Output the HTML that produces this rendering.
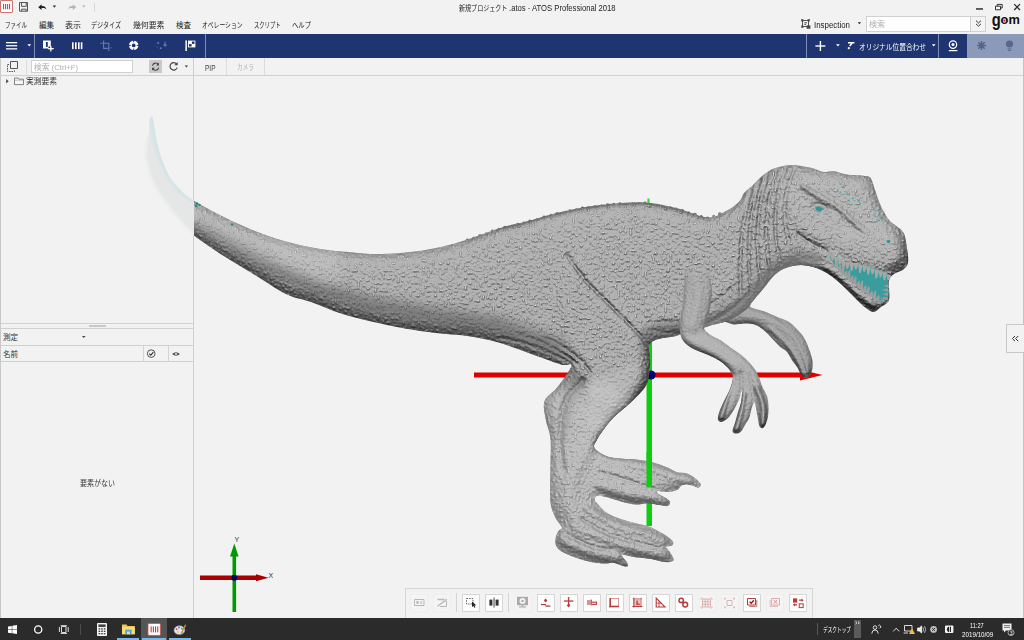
<!DOCTYPE html>
<html lang="ja">
<head>
<meta charset="utf-8">
<title>新規プロジェクト.atos - ATOS Professional 2018</title>
<style>
html,body{margin:0;padding:0;}
body{width:1024px;height:640px;overflow:hidden;position:relative;background:#f2f2f2;
 font-family:"Liberation Sans","Noto Sans CJK JP",sans-serif;font-size:8px;color:#222;}
.a{position:absolute;}
.t{position:absolute;white-space:nowrap;line-height:10px;height:10px;}
.w{color:#fff;}
svg{position:absolute;left:0;top:0;overflow:visible;}
#bluebar{left:0;top:34px;width:1024px;height:24px;background:#1f3571;}
#lightblue{left:967px;top:34px;width:57px;height:24px;background:#8c9aba;}
.vs{position:absolute;width:1px;background:#d4d4d4;}
.hs{position:absolute;height:1px;background:#d0d0d0;}
.btn{position:absolute;top:594px;width:16px;height:16px;background:#fdfdfd;border:1px solid #d6d6d6;box-sizing:content-box;}
.btn.d{background:#f4f4f4;border-color:#eeeeee;}
#taskbar{left:0;top:618px;width:1024px;height:22px;background:#2b2b2b;}
</style>
</head>
<body>
<!-- ===== title row ===== -->
<div class="a" style="left:0;top:0;width:13px;height:13px;background:#fff;border:1px solid #d07070;box-sizing:border-box;border-radius:1px;"></div>

<!-- ===== menu row ===== -->

<!-- right of menu row -->
<div class="a" style="left:866px;top:16px;width:105px;height:16px;background:#fff;border:1px solid #d0d0d0;box-sizing:border-box;"></div>
<div class="a" style="left:970px;top:16px;width:16px;height:16px;background:#f4f4f4;border:1px solid #d0d0d0;box-sizing:border-box;"></div>

<!-- ===== blue toolbar ===== -->
<div class="a" id="bluebar"></div>
<div class="a" id="lightblue"></div>
<div class="a" style="left:34px;top:34px;width:1px;height:24px;background:#7f8db5;"></div>
<div class="a" style="left:205px;top:34px;width:1px;height:24px;background:#7f8db5;"></div>
<div class="a" style="left:806px;top:34px;width:1px;height:24px;background:#7f8db5;"></div>
<div class="a" style="left:938px;top:34px;width:1px;height:24px;background:#7f8db5;"></div>

<!-- ===== sub toolbar ===== -->
<div class="a" style="left:0;top:58px;width:1px;height:560px;background:#c8c8c8;"></div>
<div class="vs" style="left:26px;top:60px;height:14px;background:#dcdcdc;"></div>
<div class="a" style="left:31px;top:60px;width:102px;height:13px;background:#fff;border:1px solid #d0d0d0;box-sizing:border-box;"></div>
<div class="a" style="left:149px;top:60px;width:13px;height:13px;background:#c9c9c9;"></div>
<div class="hs" style="left:0;top:75px;width:1024px;"></div>
<div class="vs" style="left:193px;top:58px;height:560px;background:#cfcfcf;"></div>
<div class="vs" style="left:226px;top:58px;height:17px;background:#dcdcdc;"></div>
<div class="vs" style="left:264px;top:58px;height:17px;background:#dcdcdc;"></div>

<!-- ===== left panel ===== -->
<div class="hs" style="left:1px;top:323px;width:192px;"></div>
<div class="a" style="left:89px;top:325px;width:17px;height:2px;background:#c8c8c8;"></div>
<div class="hs" style="left:1px;top:328px;width:192px;"></div>
<div class="hs" style="left:1px;top:345px;width:192px;"></div>
<div class="vs" style="left:143px;top:346px;height:15px;"></div>
<div class="vs" style="left:168px;top:346px;height:15px;"></div>
<div class="hs" style="left:1px;top:361px;width:192px;"></div>

<!-- ===== right collapse button ===== -->
<div class="a" style="left:1023px;top:58px;width:1px;height:560px;background:#c4c4c4;"></div>
<div class="a" style="left:1006px;top:324px;width:18px;height:29px;border:1px solid #c8c8c8;border-right:none;box-sizing:border-box;background:#f2f2f2;"></div>

<!-- ===== 3D VIEW ===== -->
<svg id="view" width="1024" height="640" viewBox="0 0 1024 640">
<defs>
<clipPath id="cpL"><rect x="0" y="76" width="194" height="542"/></clipPath>
<clipPath id="cpR"><rect x="194" y="76" width="830" height="542"/></clipPath>
<clipPath id="cpBA"><path d="M740.0,300.0C745.2,300.4 746.9,305.3 751.0,307.2C755.1,309.1 760.1,309.8 764.7,311.5C769.3,313.2 774.4,315.8 778.4,317.5C782.4,319.2 785.6,319.8 788.8,321.8C791.9,323.8 794.7,326.8 797.3,329.5C799.9,332.2 802.2,334.6 804.2,338.0C806.2,341.4 808.0,346.0 809.4,350.0C810.8,354.0 812.4,358.5 812.8,362.0C813.2,365.5 812.7,368.3 812.0,370.8C811.3,373.3 809.8,375.7 808.5,376.8C807.2,377.9 805.6,378.4 804.2,377.7C802.8,377.0 801.1,374.2 800.0,372.5C798.9,370.8 798.6,369.3 797.3,367.3C796.0,365.3 793.9,363.1 792.2,360.5C790.5,357.9 789.0,354.2 787.0,351.9C785.0,349.6 782.6,349.0 780.0,346.7C777.4,344.4 774.4,340.9 771.6,338.0C768.8,335.1 765.9,331.8 763.0,329.5C760.1,327.2 757.6,325.4 754.4,324.4C751.2,323.4 747.4,323.5 744.0,323.5C740.6,323.5 736.9,324.7 733.8,324.4C730.6,324.1 728.1,322.9 725.0,321.8C721.9,320.7 715.8,320.8 715.0,318.0C714.2,315.2 715.8,308.0 720.0,305.0C724.2,302.0 734.8,299.6 740.0,300.0Z"/></clipPath><clipPath id="cpFA"><path d="M686.0,268.0C688.2,264.5 693.3,263.7 697.0,264.0C700.7,264.3 705.5,265.7 708.0,270.0C710.5,274.3 711.6,284.2 712.0,290.0C712.4,295.8 711.4,300.0 710.6,305.0C709.9,310.0 708.6,316.2 707.5,320.0C706.4,323.8 703.6,325.6 704.0,328.0C704.4,330.4 707.3,332.5 710.0,334.5C712.7,336.5 716.8,337.8 720.3,340.0C723.8,342.2 727.4,345.2 731.0,347.8C734.6,350.4 738.6,352.7 742.0,355.6C745.4,358.5 749.0,361.9 751.6,365.0C754.2,368.1 756.0,370.7 757.8,374.4C759.6,378.1 761.0,383.4 762.5,387.0C764.0,390.6 766.0,392.7 767.0,396.0C768.0,399.3 768.6,403.6 768.8,407.0C768.9,410.4 768.5,413.7 768.0,416.6C767.5,419.5 766.5,422.4 765.6,424.4C764.7,426.3 763.5,428.0 762.5,428.3C761.5,428.6 760.2,427.7 759.4,426.0C758.6,424.3 758.4,421.4 757.8,418.0C757.1,414.6 756.1,408.2 755.5,405.6C754.9,403.0 754.6,402.0 754.0,402.5C753.4,403.0 752.4,406.2 751.6,408.8C750.8,411.3 750.2,415.4 749.2,418.0C748.2,420.6 746.7,422.1 745.3,424.4C743.9,426.7 742.3,430.4 740.6,432.0C738.9,433.6 736.4,434.0 735.0,433.8C733.6,433.5 732.5,432.4 732.5,430.6C732.5,428.8 734.2,425.7 735.0,422.8C735.8,419.9 736.5,416.8 737.5,413.4C738.5,410.0 740.2,405.9 741.0,402.5C741.8,399.1 741.9,394.8 742.0,393.0C742.1,391.2 741.9,390.5 741.4,391.6C740.9,392.7 740.3,396.3 739.0,399.4C737.7,402.5 735.4,407.2 733.6,410.3C731.8,413.4 730.0,416.1 728.0,418.0C726.0,419.9 723.6,421.7 721.9,422.0C720.2,422.3 718.5,421.1 718.0,419.7C717.5,418.3 717.9,416.3 718.8,413.4C719.6,410.5 721.6,406.4 723.4,402.5C725.2,398.6 728.1,393.9 729.7,390.0C731.3,386.1 732.5,381.9 732.8,379.0C733.1,376.1 732.3,374.9 731.2,372.8C730.2,370.7 728.7,368.7 726.6,366.6C724.5,364.5 721.9,362.3 718.8,360.3C715.6,358.3 710.9,356.2 707.8,354.8C704.7,353.4 703.0,353.0 700.0,351.7C697.0,350.4 693.0,349.1 690.0,347.0C687.0,344.9 683.7,342.2 682.0,339.0C680.3,335.8 680.0,332.0 679.8,328.0C679.6,324.0 680.5,319.3 681.0,315.0C681.5,310.7 682.5,307.0 683.0,302.0C683.5,297.0 683.5,290.7 684.0,285.0C684.5,279.3 683.8,271.5 686.0,268.0Z"/></clipPath>
<linearGradient id="gFA" gradientUnits="userSpaceOnUse" x1="0" y1="264" x2="0" y2="292"><stop offset="0" stop-color="#fff" stop-opacity="0"/><stop offset="1" stop-color="#fff" stop-opacity="1"/></linearGradient>
<mask id="mFA" maskUnits="userSpaceOnUse" x="670" y="255" width="110" height="190"><rect x="670" y="255" width="110" height="190" fill="url(#gFA)"/></mask>
<clipPath id="cpD"><path d="M152.2,116.0C153.0,117.2 153.8,123.7 154.6,128.0C155.4,132.3 155.8,136.9 157.0,142.0C158.2,147.1 159.5,152.7 161.6,158.5C163.7,164.3 166.5,171.6 169.8,177.0C173.1,182.4 177.5,187.0 181.5,191.0C185.5,195.0 187.0,196.5 194.0,200.8C201.0,205.1 213.6,212.0 223.8,217.0C233.9,222.0 244.6,226.9 255.0,231.0C265.4,235.1 275.6,238.6 286.0,241.5C296.4,244.4 307.0,246.7 317.5,248.4C328.0,250.2 339.4,251.1 348.8,252.0C358.1,252.9 364.4,253.9 373.8,254.0C383.1,254.1 394.6,253.5 405.0,252.5C415.4,251.5 425.6,250.2 436.0,248.0C446.4,245.8 457.0,242.7 467.5,239.4C478.0,236.1 488.3,231.5 498.8,228.4C509.2,225.3 521.3,222.9 530.0,220.6C538.7,218.3 542.2,216.6 551.0,214.4C559.8,212.2 572.0,209.3 582.5,207.5C593.0,205.7 603.3,204.2 613.8,203.4C624.2,202.6 634.6,201.7 645.0,202.5C655.4,203.3 665.6,205.5 676.0,208.0C686.4,210.5 699.2,217.0 707.5,217.5C715.8,218.0 720.8,213.6 726.0,211.0C731.2,208.4 735.8,205.0 738.8,202.0C741.8,199.0 741.8,195.7 744.0,193.0C746.2,190.3 749.2,188.7 752.0,186.0C754.8,183.3 758.2,179.5 761.0,177.0C763.8,174.5 766.3,172.6 769.0,171.0C771.7,169.4 773.3,168.6 777.0,167.6C780.7,166.6 785.5,165.0 791.0,165.0C796.5,165.0 804.2,166.4 809.7,167.6C815.2,168.8 819.9,171.4 823.8,172.0C827.6,172.6 829.1,170.6 833.0,171.0C836.9,171.4 841.9,173.8 847.0,174.6C852.1,175.4 859.7,175.2 863.6,175.8C867.5,176.4 868.7,175.6 870.6,178.0C872.5,180.4 873.4,185.7 875.0,190.0C876.6,194.3 877.7,199.0 880.0,204.0C882.3,209.0 885.2,215.3 889.0,220.0C892.8,224.7 900.0,227.3 903.0,232.0C906.0,236.7 906.2,243.3 907.0,248.4C907.8,253.5 908.6,259.0 908.0,262.5C907.4,266.0 905.7,267.6 903.4,269.5C901.1,271.4 896.4,272.1 894.0,274.0C891.6,275.9 889.8,276.7 889.0,281.0C888.2,285.3 890.3,295.7 889.0,300.0C887.7,304.3 883.6,305.0 881.0,307.0C878.4,309.0 876.1,311.8 873.6,312.0C871.1,312.2 868.8,310.0 866.0,308.0C863.2,306.0 860.8,303.7 857.0,300.0C853.2,296.3 847.7,290.2 843.0,286.0C838.3,281.8 833.7,277.6 829.0,274.5C824.3,271.4 819.7,269.1 815.0,267.5C810.3,265.9 805.7,265.0 801.0,265.0C796.3,265.0 791.3,265.9 787.0,267.5C782.7,269.1 778.9,271.0 775.0,274.5C771.1,278.0 767.3,283.9 763.4,288.6C759.5,293.3 754.1,299.5 751.7,302.6C749.3,305.7 751.0,305.1 749.0,307.0C747.0,308.9 744.0,311.5 740.0,314.0C736.0,316.5 729.7,320.0 725.0,321.8C720.3,323.6 716.2,323.8 712.0,325.0C707.8,326.2 703.7,327.8 700.0,329.0C696.3,330.2 693.4,331.1 690.0,332.0C686.6,332.9 682.1,333.8 679.8,334.5C677.5,335.2 680.8,334.7 676.0,336.0C671.2,337.3 655.3,337.9 651.0,342.5C646.7,347.1 650.8,356.4 650.0,363.4C649.2,370.4 649.8,377.9 646.5,384.5C643.2,391.1 635.5,397.6 630.0,403.0C624.5,408.4 618.2,412.5 613.8,417.0C609.3,421.5 606.0,426.2 603.2,430.0C600.4,433.8 598.4,437.0 596.9,439.8C595.4,442.6 593.5,444.8 594.0,446.9C594.5,449.0 597.4,450.9 599.7,452.5C602.0,454.1 604.2,455.6 608.0,456.7C611.8,457.8 617.5,458.3 622.2,458.8C626.9,459.3 631.6,459.0 636.3,459.5C641.0,460.0 646.1,460.8 650.3,461.7C654.5,462.6 658.3,464.0 661.6,465.2C664.9,466.4 667.4,467.5 670.0,468.7C672.6,469.9 674.2,471.4 677.0,472.2C679.8,473.0 683.9,472.6 687.0,473.6C690.1,474.7 693.1,476.7 695.4,478.5C697.7,480.3 700.2,482.7 700.7,484.2C701.2,485.7 699.6,487.5 698.2,487.7C696.8,487.9 694.4,486.2 692.5,485.6C690.6,485.0 688.9,484.2 687.0,484.2C685.1,484.2 682.7,484.8 681.3,485.6C679.9,486.4 679.9,488.1 678.5,489.0C677.1,489.9 675.2,490.7 672.9,491.2C670.5,491.7 667.0,491.9 664.4,491.9C661.8,491.9 657.9,490.8 657.0,491.2C656.1,491.6 657.1,492.7 658.8,494.0C660.5,495.3 665.3,497.5 667.2,498.9C669.1,500.3 669.9,501.3 670.0,502.5C670.1,503.7 669.4,505.5 668.0,506.0C666.6,506.5 664.1,505.7 661.6,505.3C659.1,504.9 655.8,504.2 653.2,503.9C650.6,503.5 648.9,503.1 646.1,503.2C643.3,503.3 640.3,504.8 636.3,504.6C632.3,504.4 626.9,503.0 622.2,501.8C617.5,500.6 612.0,498.6 608.0,497.5C604.0,496.4 600.2,495.2 598.0,495.5C595.8,495.8 594.5,498.0 594.5,499.4C594.5,500.8 595.9,501.9 597.8,504.0C599.6,506.1 602.2,509.6 605.6,511.9C609.0,514.2 613.3,516.2 618.0,518.0C622.7,519.8 628.5,521.3 633.8,522.8C639.0,524.2 645.8,525.5 649.4,526.7C653.0,527.9 652.7,528.2 655.6,529.8C658.5,531.3 663.7,534.0 666.6,536.0C669.5,538.0 671.9,540.0 672.8,541.6C673.7,543.2 673.2,544.6 672.0,545.5C670.8,546.4 666.2,546.1 665.5,546.8C664.8,547.4 666.8,547.7 668.0,549.4C669.2,551.1 672.0,555.1 672.8,557.0C673.6,558.9 674.1,560.2 672.8,561.0C671.5,561.8 668.9,562.4 665.0,562.0C661.1,561.6 654.6,559.6 649.4,558.8C644.2,557.9 638.3,557.7 633.8,557.0C629.2,556.3 623.8,554.5 622.0,554.5C620.2,554.5 621.9,555.5 622.8,557.0C623.7,558.5 627.0,561.8 627.5,563.4C628.0,565.0 628.4,566.7 626.0,566.6C623.6,566.5 616.6,563.2 613.4,562.7C610.2,562.2 610.1,563.4 607.0,563.4C603.9,563.4 599.4,563.5 594.7,562.7C590.0,561.9 584.2,560.5 579.0,558.8C573.8,557.0 567.2,554.6 563.4,552.5C559.6,550.4 557.7,548.6 556.4,546.2C555.1,543.9 555.2,541.0 555.6,538.4C556.0,535.8 557.7,532.4 558.8,530.6C559.8,528.8 562.5,529.6 562.0,527.5C561.5,525.4 557.4,521.6 555.6,518.0C553.8,514.4 551.9,510.3 551.0,505.6C550.1,500.9 550.3,496.8 550.2,490.0C550.1,483.2 550.5,473.6 550.5,465.0C550.5,456.4 551.3,445.9 550.5,438.4C549.7,430.8 546.8,425.9 545.8,419.7C544.8,413.5 542.6,406.4 544.6,401.0C546.6,395.6 553.0,392.9 557.5,387.0C562.0,381.1 570.9,369.6 571.5,365.8C572.1,362.0 567.9,366.5 561.0,364.4C554.1,362.3 540.4,357.0 530.0,353.4C519.6,349.8 509.2,345.4 498.8,342.5C488.3,339.6 478.0,337.6 467.5,336.0C457.0,334.4 446.4,334.3 436.0,333.0C425.6,331.7 415.4,330.2 405.0,328.4C394.6,326.6 384.2,324.4 373.8,322.0C363.3,319.6 353.0,317.3 342.5,314.0C332.0,310.7 320.4,305.3 311.0,302.0C301.6,298.7 295.3,298.5 286.0,294.0C276.7,289.5 265.4,281.3 255.0,275.0C244.6,268.7 233.9,262.6 223.8,256.0C213.6,249.4 201.0,240.8 194.0,235.5C187.0,230.2 185.9,228.6 181.5,224.0C177.1,219.4 171.8,213.2 167.5,207.7C163.2,202.2 158.9,196.4 155.8,191.0C152.7,185.6 150.6,180.4 148.7,175.0C146.8,169.6 145.2,163.3 144.5,158.5C143.8,153.7 143.8,150.2 144.5,146.0C145.2,141.8 147.9,137.2 148.7,133.0C149.5,128.8 148.9,123.8 149.5,121.0C150.1,118.2 151.3,114.8 152.2,116.0ZM465.6,240.3a1.9,1.9 0 1 1 3.8,0a1.9,1.9 0 1 1 -3.8,0ZM472.2,238.1a1.5,1.5 0 1 1 3.0,0a1.5,1.5 0 1 1 -3.0,0ZM478.1,235.9a1.9,1.9 0 1 1 3.8,0a1.9,1.9 0 1 1 -3.8,0ZM484.8,233.7a1.5,1.5 0 1 1 3.0,0a1.5,1.5 0 1 1 -3.0,0ZM490.6,231.5a1.9,1.9 0 1 1 3.8,0a1.9,1.9 0 1 1 -3.8,0ZM497.2,229.3a1.5,1.5 0 1 1 3.0,0a1.5,1.5 0 1 1 -3.0,0ZM503.1,227.7a1.9,1.9 0 1 1 3.8,0a1.9,1.9 0 1 1 -3.8,0ZM509.8,226.2a1.5,1.5 0 1 1 3.0,0a1.5,1.5 0 1 1 -3.0,0ZM515.6,224.6a1.9,1.9 0 1 1 3.8,0a1.9,1.9 0 1 1 -3.8,0ZM522.2,223.1a1.5,1.5 0 1 1 3.0,0a1.5,1.5 0 1 1 -3.0,0ZM528.1,221.5a1.9,1.9 0 1 1 3.8,0a1.9,1.9 0 1 1 -3.8,0ZM535.5,219.4a1.5,1.5 0 1 1 3.0,0a1.5,1.5 0 1 1 -3.0,0ZM542.1,217.4a1.9,1.9 0 1 1 3.8,0a1.9,1.9 0 1 1 -3.8,0ZM549.5,215.3a1.5,1.5 0 1 1 3.0,0a1.5,1.5 0 1 1 -3.0,0ZM555.4,213.9a1.9,1.9 0 1 1 3.8,0a1.9,1.9 0 1 1 -3.8,0ZM562.1,212.5a1.5,1.5 0 1 1 3.0,0a1.5,1.5 0 1 1 -3.0,0ZM568.0,211.2a1.9,1.9 0 1 1 3.8,0a1.9,1.9 0 1 1 -3.8,0ZM574.7,209.8a1.5,1.5 0 1 1 3.0,0a1.5,1.5 0 1 1 -3.0,0ZM580.6,208.4a1.9,1.9 0 1 1 3.8,0a1.9,1.9 0 1 1 -3.8,0ZM587.2,207.6a1.5,1.5 0 1 1 3.0,0a1.5,1.5 0 1 1 -3.0,0ZM593.1,206.8a1.9,1.9 0 1 1 3.8,0a1.9,1.9 0 1 1 -3.8,0ZM599.8,205.9a1.5,1.5 0 1 1 3.0,0a1.5,1.5 0 1 1 -3.0,0ZM605.6,205.1a1.9,1.9 0 1 1 3.8,0a1.9,1.9 0 1 1 -3.8,0ZM612.2,204.3a1.5,1.5 0 1 1 3.0,0a1.5,1.5 0 1 1 -3.0,0ZM618.1,204.1a1.9,1.9 0 1 1 3.8,0a1.9,1.9 0 1 1 -3.8,0ZM624.8,203.9a1.5,1.5 0 1 1 3.0,0a1.5,1.5 0 1 1 -3.0,0ZM630.6,203.8a1.9,1.9 0 1 1 3.8,0a1.9,1.9 0 1 1 -3.8,0ZM637.2,203.6a1.5,1.5 0 1 1 3.0,0a1.5,1.5 0 1 1 -3.0,0ZM643.1,203.4a1.9,1.9 0 1 1 3.8,0a1.9,1.9 0 1 1 -3.8,0ZM649.7,204.5a1.5,1.5 0 1 1 3.0,0a1.5,1.5 0 1 1 -3.0,0ZM655.5,205.6a1.9,1.9 0 1 1 3.8,0a1.9,1.9 0 1 1 -3.8,0ZM662.1,206.7a1.5,1.5 0 1 1 3.0,0a1.5,1.5 0 1 1 -3.0,0ZM667.9,207.8a1.9,1.9 0 1 1 3.8,0a1.9,1.9 0 1 1 -3.8,0ZM674.5,208.9a1.5,1.5 0 1 1 3.0,0a1.5,1.5 0 1 1 -3.0,0ZM680.4,210.8a1.9,1.9 0 1 1 3.8,0a1.9,1.9 0 1 1 -3.8,0ZM687.1,212.7a1.5,1.5 0 1 1 3.0,0a1.5,1.5 0 1 1 -3.0,0ZM693.0,214.6a1.9,1.9 0 1 1 3.8,0a1.9,1.9 0 1 1 -3.8,0ZM699.7,216.5a1.5,1.5 0 1 1 3.0,0a1.5,1.5 0 1 1 -3.0,0ZM705.6,218.4a1.9,1.9 0 1 1 3.8,0a1.9,1.9 0 1 1 -3.8,0ZM712.2,216.2a1.5,1.5 0 1 1 3.0,0a1.5,1.5 0 1 1 -3.0,0ZM717.9,214.1a1.9,1.9 0 1 1 3.8,0a1.9,1.9 0 1 1 -3.8,0Z"/></clipPath>
<linearGradient id="gB" gradientUnits="userSpaceOnUse" x1="0" y1="160" x2="0" y2="570"><stop offset="0" stop-color="#fff" stop-opacity="0"/><stop offset="0.5" stop-color="#888" stop-opacity="0"/><stop offset="1" stop-color="#000" stop-opacity="0.05"/></linearGradient>
<filter id="bl6" filterUnits="userSpaceOnUse" x="100" y="80" width="900" height="520"><feGaussianBlur stdDeviation="6"/></filter>
<filter id="bl3" filterUnits="userSpaceOnUse" x="100" y="80" width="900" height="520"><feGaussianBlur stdDeviation="3"/></filter>
<filter id="bl1" filterUnits="userSpaceOnUse" x="100" y="80" width="900" height="520"><feGaussianBlur stdDeviation="1"/></filter>
<filter id="lit" x="0" y="0" width="100%" height="100%" color-interpolation-filters="sRGB">
 <feGaussianBlur in="SourceAlpha" stdDeviation="7" result="ba"/>
 <feColorMatrix in="SourceGraphic" type="matrix" values="0 0 0 0 0  0 0 0 0 0  0 0 0 0 0  0.5 -0.5 0 0 0.5" result="f0"/>
 <feGaussianBlur in="f0" stdDeviation="0.9" result="f"/>
 <feTurbulence type="fractalNoise" baseFrequency="0.4" numOctaves="2" seed="3" result="n"/>
 <feColorMatrix in="n" type="matrix" values="0 0 0 0 0  0 0 0 0 0  0 0 0 0 0  0 0 0 3.5 -1.75" result="nt"/>
 <feGaussianBlur in="nt" stdDeviation="0.55" result="ntb"/>
 <feColorMatrix in="ntb" type="matrix" values="0 0 0 0 0  0 0 0 0 0  0 0 0 0 0  0 0 0 0.052 0" result="na"/>
 <feComposite in="ba" in2="f" operator="arithmetic" k1="0" k2="0.5" k3="0.4" k4="0" result="h1"/>
 <feComposite in="h1" in2="na" operator="arithmetic" k1="0" k2="1" k3="1" k4="0" result="h"/>
 <feDiffuseLighting in="h" surfaceScale="20" diffuseConstant="1.03" lighting-color="#ffffff" result="L">
  <feDistantLight azimuth="265" elevation="72"/>
 </feDiffuseLighting>
 <feFlood flood-color="#b4b4b4" result="alb"/>
 <feBlend in="alb" in2="L" mode="multiply" result="m"/>
 <feColorMatrix in="n" type="matrix" values="0 0 0 0 1  0 0 0 0 1  0 0 0 0 1  0 0 0 5 -3.3" result="sp"/>
 <feComposite in="sp" in2="m" operator="arithmetic" k1="0" k2="0.22" k3="1" k4="0" result="m2"/>
 <feComposite in="m2" in2="SourceAlpha" operator="in"/>
</filter><filter id="lits" x="0" y="0" width="100%" height="100%" color-interpolation-filters="sRGB">
 <feGaussianBlur in="SourceAlpha" stdDeviation="2.6" result="ba"/>
 <feColorMatrix in="SourceGraphic" type="matrix" values="0 0 0 0 0  0 0 0 0 0  0 0 0 0 0  0.5 -0.5 0 0 0.5" result="f0"/>
 <feGaussianBlur in="f0" stdDeviation="0.7" result="f"/>
 <feTurbulence type="fractalNoise" baseFrequency="0.5" numOctaves="2" seed="3" result="n"/>
 <feColorMatrix in="n" type="matrix" values="0 0 0 0 0  0 0 0 0 0  0 0 0 0 0  0 0 0 1 0" result="nt"/>
 <feGaussianBlur in="nt" stdDeviation="0.55" result="ntb"/>
 <feColorMatrix in="ntb" type="matrix" values="0 0 0 0 0  0 0 0 0 0  0 0 0 0 0  0 0 0 0.03 0" result="na"/>
 <feComposite in="ba" in2="f" operator="arithmetic" k1="0" k2="0.15" k3="0.4" k4="0" result="h1"/>
 <feComposite in="h1" in2="na" operator="arithmetic" k1="0" k2="1" k3="1" k4="0" result="h"/>
 <feDiffuseLighting in="h" surfaceScale="20" diffuseConstant="1.03" lighting-color="#ffffff" result="L">
  <feDistantLight azimuth="265" elevation="72"/>
 </feDiffuseLighting>
 <feFlood flood-color="#b4b4b4" result="alb"/>
 <feBlend in="alb" in2="L" mode="multiply" result="m"/>
 <feColorMatrix in="n" type="matrix" values="0 0 0 0 1  0 0 0 0 1  0 0 0 0 1  0 0 0 5 -3.3" result="sp"/>
 <feComposite in="sp" in2="m" operator="arithmetic" k1="0" k2="0.1" k3="1" k4="0" result="m2"/>
 <feComposite in="m2" in2="SourceAlpha" operator="in"/>
</filter>
</defs>
<rect x="474" y="372.5" width="328" height="5" fill="#dd0000"/>
<path d="M800,369.5L822.5,375L800,380.5Z" fill="#dd0000"/>
<rect x="646.5" y="340" width="5.5" height="186" fill="#10cc10"/><rect x="647.4" y="198.6" width="2.2" height="5" fill="#30dd30"/>
<circle cx="651" cy="375" r="4.6" fill="#000070"/>
<g clip-path="url(#cpL)"><path d="M152.2,116.0C153.0,117.2 153.8,123.7 154.6,128.0C155.4,132.3 155.8,136.9 157.0,142.0C158.2,147.1 159.5,152.7 161.6,158.5C163.7,164.3 166.5,171.6 169.8,177.0C173.1,182.4 177.5,187.0 181.5,191.0C185.5,195.0 187.0,196.5 194.0,200.8C201.0,205.1 213.6,212.0 223.8,217.0C233.9,222.0 244.6,226.9 255.0,231.0C265.4,235.1 275.6,238.6 286.0,241.5C296.4,244.4 307.0,246.7 317.5,248.4C328.0,250.2 339.4,251.1 348.8,252.0C358.1,252.9 364.4,253.9 373.8,254.0C383.1,254.1 394.6,253.5 405.0,252.5C415.4,251.5 425.6,250.2 436.0,248.0C446.4,245.8 457.0,242.7 467.5,239.4C478.0,236.1 488.3,231.5 498.8,228.4C509.2,225.3 521.3,222.9 530.0,220.6C538.7,218.3 542.2,216.6 551.0,214.4C559.8,212.2 572.0,209.3 582.5,207.5C593.0,205.7 603.3,204.2 613.8,203.4C624.2,202.6 634.6,201.7 645.0,202.5C655.4,203.3 665.6,205.5 676.0,208.0C686.4,210.5 699.2,217.0 707.5,217.5C715.8,218.0 720.8,213.6 726.0,211.0C731.2,208.4 735.8,205.0 738.8,202.0C741.8,199.0 741.8,195.7 744.0,193.0C746.2,190.3 749.2,188.7 752.0,186.0C754.8,183.3 758.2,179.5 761.0,177.0C763.8,174.5 766.3,172.6 769.0,171.0C771.7,169.4 773.3,168.6 777.0,167.6C780.7,166.6 785.5,165.0 791.0,165.0C796.5,165.0 804.2,166.4 809.7,167.6C815.2,168.8 819.9,171.4 823.8,172.0C827.6,172.6 829.1,170.6 833.0,171.0C836.9,171.4 841.9,173.8 847.0,174.6C852.1,175.4 859.7,175.2 863.6,175.8C867.5,176.4 868.7,175.6 870.6,178.0C872.5,180.4 873.4,185.7 875.0,190.0C876.6,194.3 877.7,199.0 880.0,204.0C882.3,209.0 885.2,215.3 889.0,220.0C892.8,224.7 900.0,227.3 903.0,232.0C906.0,236.7 906.2,243.3 907.0,248.4C907.8,253.5 908.6,259.0 908.0,262.5C907.4,266.0 905.7,267.6 903.4,269.5C901.1,271.4 896.4,272.1 894.0,274.0C891.6,275.9 889.8,276.7 889.0,281.0C888.2,285.3 890.3,295.7 889.0,300.0C887.7,304.3 883.6,305.0 881.0,307.0C878.4,309.0 876.1,311.8 873.6,312.0C871.1,312.2 868.8,310.0 866.0,308.0C863.2,306.0 860.8,303.7 857.0,300.0C853.2,296.3 847.7,290.2 843.0,286.0C838.3,281.8 833.7,277.6 829.0,274.5C824.3,271.4 819.7,269.1 815.0,267.5C810.3,265.9 805.7,265.0 801.0,265.0C796.3,265.0 791.3,265.9 787.0,267.5C782.7,269.1 778.9,271.0 775.0,274.5C771.1,278.0 767.3,283.9 763.4,288.6C759.5,293.3 754.1,299.5 751.7,302.6C749.3,305.7 751.0,305.1 749.0,307.0C747.0,308.9 744.0,311.5 740.0,314.0C736.0,316.5 729.7,320.0 725.0,321.8C720.3,323.6 716.2,323.8 712.0,325.0C707.8,326.2 703.7,327.8 700.0,329.0C696.3,330.2 693.4,331.1 690.0,332.0C686.6,332.9 682.1,333.8 679.8,334.5C677.5,335.2 680.8,334.7 676.0,336.0C671.2,337.3 655.3,337.9 651.0,342.5C646.7,347.1 650.8,356.4 650.0,363.4C649.2,370.4 649.8,377.9 646.5,384.5C643.2,391.1 635.5,397.6 630.0,403.0C624.5,408.4 618.2,412.5 613.8,417.0C609.3,421.5 606.0,426.2 603.2,430.0C600.4,433.8 598.4,437.0 596.9,439.8C595.4,442.6 593.5,444.8 594.0,446.9C594.5,449.0 597.4,450.9 599.7,452.5C602.0,454.1 604.2,455.6 608.0,456.7C611.8,457.8 617.5,458.3 622.2,458.8C626.9,459.3 631.6,459.0 636.3,459.5C641.0,460.0 646.1,460.8 650.3,461.7C654.5,462.6 658.3,464.0 661.6,465.2C664.9,466.4 667.4,467.5 670.0,468.7C672.6,469.9 674.2,471.4 677.0,472.2C679.8,473.0 683.9,472.6 687.0,473.6C690.1,474.7 693.1,476.7 695.4,478.5C697.7,480.3 700.2,482.7 700.7,484.2C701.2,485.7 699.6,487.5 698.2,487.7C696.8,487.9 694.4,486.2 692.5,485.6C690.6,485.0 688.9,484.2 687.0,484.2C685.1,484.2 682.7,484.8 681.3,485.6C679.9,486.4 679.9,488.1 678.5,489.0C677.1,489.9 675.2,490.7 672.9,491.2C670.5,491.7 667.0,491.9 664.4,491.9C661.8,491.9 657.9,490.8 657.0,491.2C656.1,491.6 657.1,492.7 658.8,494.0C660.5,495.3 665.3,497.5 667.2,498.9C669.1,500.3 669.9,501.3 670.0,502.5C670.1,503.7 669.4,505.5 668.0,506.0C666.6,506.5 664.1,505.7 661.6,505.3C659.1,504.9 655.8,504.2 653.2,503.9C650.6,503.5 648.9,503.1 646.1,503.2C643.3,503.3 640.3,504.8 636.3,504.6C632.3,504.4 626.9,503.0 622.2,501.8C617.5,500.6 612.0,498.6 608.0,497.5C604.0,496.4 600.2,495.2 598.0,495.5C595.8,495.8 594.5,498.0 594.5,499.4C594.5,500.8 595.9,501.9 597.8,504.0C599.6,506.1 602.2,509.6 605.6,511.9C609.0,514.2 613.3,516.2 618.0,518.0C622.7,519.8 628.5,521.3 633.8,522.8C639.0,524.2 645.8,525.5 649.4,526.7C653.0,527.9 652.7,528.2 655.6,529.8C658.5,531.3 663.7,534.0 666.6,536.0C669.5,538.0 671.9,540.0 672.8,541.6C673.7,543.2 673.2,544.6 672.0,545.5C670.8,546.4 666.2,546.1 665.5,546.8C664.8,547.4 666.8,547.7 668.0,549.4C669.2,551.1 672.0,555.1 672.8,557.0C673.6,558.9 674.1,560.2 672.8,561.0C671.5,561.8 668.9,562.4 665.0,562.0C661.1,561.6 654.6,559.6 649.4,558.8C644.2,557.9 638.3,557.7 633.8,557.0C629.2,556.3 623.8,554.5 622.0,554.5C620.2,554.5 621.9,555.5 622.8,557.0C623.7,558.5 627.0,561.8 627.5,563.4C628.0,565.0 628.4,566.7 626.0,566.6C623.6,566.5 616.6,563.2 613.4,562.7C610.2,562.2 610.1,563.4 607.0,563.4C603.9,563.4 599.4,563.5 594.7,562.7C590.0,561.9 584.2,560.5 579.0,558.8C573.8,557.0 567.2,554.6 563.4,552.5C559.6,550.4 557.7,548.6 556.4,546.2C555.1,543.9 555.2,541.0 555.6,538.4C556.0,535.8 557.7,532.4 558.8,530.6C559.8,528.8 562.5,529.6 562.0,527.5C561.5,525.4 557.4,521.6 555.6,518.0C553.8,514.4 551.9,510.3 551.0,505.6C550.1,500.9 550.3,496.8 550.2,490.0C550.1,483.2 550.5,473.6 550.5,465.0C550.5,456.4 551.3,445.9 550.5,438.4C549.7,430.8 546.8,425.9 545.8,419.7C544.8,413.5 542.6,406.4 544.6,401.0C546.6,395.6 553.0,392.9 557.5,387.0C562.0,381.1 570.9,369.6 571.5,365.8C572.1,362.0 567.9,366.5 561.0,364.4C554.1,362.3 540.4,357.0 530.0,353.4C519.6,349.8 509.2,345.4 498.8,342.5C488.3,339.6 478.0,337.6 467.5,336.0C457.0,334.4 446.4,334.3 436.0,333.0C425.6,331.7 415.4,330.2 405.0,328.4C394.6,326.6 384.2,324.4 373.8,322.0C363.3,319.6 353.0,317.3 342.5,314.0C332.0,310.7 320.4,305.3 311.0,302.0C301.6,298.7 295.3,298.5 286.0,294.0C276.7,289.5 265.4,281.3 255.0,275.0C244.6,268.7 233.9,262.6 223.8,256.0C213.6,249.4 201.0,240.8 194.0,235.5C187.0,230.2 185.9,228.6 181.5,224.0C177.1,219.4 171.8,213.2 167.5,207.7C163.2,202.2 158.9,196.4 155.8,191.0C152.7,185.6 150.6,180.4 148.7,175.0C146.8,169.6 145.2,163.3 144.5,158.5C143.8,153.7 143.8,150.2 144.5,146.0C145.2,141.8 147.9,137.2 148.7,133.0C149.5,128.8 148.9,123.8 149.5,121.0C150.1,118.2 151.3,114.8 152.2,116.0ZM465.6,240.3a1.9,1.9 0 1 1 3.8,0a1.9,1.9 0 1 1 -3.8,0ZM472.2,238.1a1.5,1.5 0 1 1 3.0,0a1.5,1.5 0 1 1 -3.0,0ZM478.1,235.9a1.9,1.9 0 1 1 3.8,0a1.9,1.9 0 1 1 -3.8,0ZM484.8,233.7a1.5,1.5 0 1 1 3.0,0a1.5,1.5 0 1 1 -3.0,0ZM490.6,231.5a1.9,1.9 0 1 1 3.8,0a1.9,1.9 0 1 1 -3.8,0ZM497.2,229.3a1.5,1.5 0 1 1 3.0,0a1.5,1.5 0 1 1 -3.0,0ZM503.1,227.7a1.9,1.9 0 1 1 3.8,0a1.9,1.9 0 1 1 -3.8,0ZM509.8,226.2a1.5,1.5 0 1 1 3.0,0a1.5,1.5 0 1 1 -3.0,0ZM515.6,224.6a1.9,1.9 0 1 1 3.8,0a1.9,1.9 0 1 1 -3.8,0ZM522.2,223.1a1.5,1.5 0 1 1 3.0,0a1.5,1.5 0 1 1 -3.0,0ZM528.1,221.5a1.9,1.9 0 1 1 3.8,0a1.9,1.9 0 1 1 -3.8,0ZM535.5,219.4a1.5,1.5 0 1 1 3.0,0a1.5,1.5 0 1 1 -3.0,0ZM542.1,217.4a1.9,1.9 0 1 1 3.8,0a1.9,1.9 0 1 1 -3.8,0ZM549.5,215.3a1.5,1.5 0 1 1 3.0,0a1.5,1.5 0 1 1 -3.0,0ZM555.4,213.9a1.9,1.9 0 1 1 3.8,0a1.9,1.9 0 1 1 -3.8,0ZM562.1,212.5a1.5,1.5 0 1 1 3.0,0a1.5,1.5 0 1 1 -3.0,0ZM568.0,211.2a1.9,1.9 0 1 1 3.8,0a1.9,1.9 0 1 1 -3.8,0ZM574.7,209.8a1.5,1.5 0 1 1 3.0,0a1.5,1.5 0 1 1 -3.0,0ZM580.6,208.4a1.9,1.9 0 1 1 3.8,0a1.9,1.9 0 1 1 -3.8,0ZM587.2,207.6a1.5,1.5 0 1 1 3.0,0a1.5,1.5 0 1 1 -3.0,0ZM593.1,206.8a1.9,1.9 0 1 1 3.8,0a1.9,1.9 0 1 1 -3.8,0ZM599.8,205.9a1.5,1.5 0 1 1 3.0,0a1.5,1.5 0 1 1 -3.0,0ZM605.6,205.1a1.9,1.9 0 1 1 3.8,0a1.9,1.9 0 1 1 -3.8,0ZM612.2,204.3a1.5,1.5 0 1 1 3.0,0a1.5,1.5 0 1 1 -3.0,0ZM618.1,204.1a1.9,1.9 0 1 1 3.8,0a1.9,1.9 0 1 1 -3.8,0ZM624.8,203.9a1.5,1.5 0 1 1 3.0,0a1.5,1.5 0 1 1 -3.0,0ZM630.6,203.8a1.9,1.9 0 1 1 3.8,0a1.9,1.9 0 1 1 -3.8,0ZM637.2,203.6a1.5,1.5 0 1 1 3.0,0a1.5,1.5 0 1 1 -3.0,0ZM643.1,203.4a1.9,1.9 0 1 1 3.8,0a1.9,1.9 0 1 1 -3.8,0ZM649.7,204.5a1.5,1.5 0 1 1 3.0,0a1.5,1.5 0 1 1 -3.0,0ZM655.5,205.6a1.9,1.9 0 1 1 3.8,0a1.9,1.9 0 1 1 -3.8,0ZM662.1,206.7a1.5,1.5 0 1 1 3.0,0a1.5,1.5 0 1 1 -3.0,0ZM667.9,207.8a1.9,1.9 0 1 1 3.8,0a1.9,1.9 0 1 1 -3.8,0ZM674.5,208.9a1.5,1.5 0 1 1 3.0,0a1.5,1.5 0 1 1 -3.0,0ZM680.4,210.8a1.9,1.9 0 1 1 3.8,0a1.9,1.9 0 1 1 -3.8,0ZM687.1,212.7a1.5,1.5 0 1 1 3.0,0a1.5,1.5 0 1 1 -3.0,0ZM693.0,214.6a1.9,1.9 0 1 1 3.8,0a1.9,1.9 0 1 1 -3.8,0ZM699.7,216.5a1.5,1.5 0 1 1 3.0,0a1.5,1.5 0 1 1 -3.0,0ZM705.6,218.4a1.9,1.9 0 1 1 3.8,0a1.9,1.9 0 1 1 -3.8,0ZM712.2,216.2a1.5,1.5 0 1 1 3.0,0a1.5,1.5 0 1 1 -3.0,0ZM717.9,214.1a1.9,1.9 0 1 1 3.8,0a1.9,1.9 0 1 1 -3.8,0Z" fill="#e5e7e7"/><g clip-path="url(#cpD)"><path d="M152.5,116L155,130L158,143L163,159L171,177L182,190L195,200" fill="none" stroke="#d5e4e6" stroke-width="9" filter="url(#bl1)"/><path d="M146,130L144.5,158L149,176L157,193L169,209L183,226L195,237" fill="none" stroke="#f0f0f0" stroke-width="4" filter="url(#bl1)"/></g></g>
<g filter="url(#lits)">
<path d="M740.0,300.0C745.2,300.4 746.9,305.3 751.0,307.2C755.1,309.1 760.1,309.8 764.7,311.5C769.3,313.2 774.4,315.8 778.4,317.5C782.4,319.2 785.6,319.8 788.8,321.8C791.9,323.8 794.7,326.8 797.3,329.5C799.9,332.2 802.2,334.6 804.2,338.0C806.2,341.4 808.0,346.0 809.4,350.0C810.8,354.0 812.4,358.5 812.8,362.0C813.2,365.5 812.7,368.3 812.0,370.8C811.3,373.3 809.8,375.7 808.5,376.8C807.2,377.9 805.6,378.4 804.2,377.7C802.8,377.0 801.1,374.2 800.0,372.5C798.9,370.8 798.6,369.3 797.3,367.3C796.0,365.3 793.9,363.1 792.2,360.5C790.5,357.9 789.0,354.2 787.0,351.9C785.0,349.6 782.6,349.0 780.0,346.7C777.4,344.4 774.4,340.9 771.6,338.0C768.8,335.1 765.9,331.8 763.0,329.5C760.1,327.2 757.6,325.4 754.4,324.4C751.2,323.4 747.4,323.5 744.0,323.5C740.6,323.5 736.9,324.7 733.8,324.4C730.6,324.1 728.1,322.9 725.0,321.8C721.9,320.7 715.8,320.8 715.0,318.0C714.2,315.2 715.8,308.0 720.0,305.0C724.2,302.0 734.8,299.6 740.0,300.0Z" fill="#000"/>
<g clip-path="url(#cpBA)">
<path d="M735.0,314.0C740.0,314.8 755.8,315.3 765.0,319.0C774.2,322.7 783.2,328.8 790.0,336.0C796.8,343.2 803.3,357.7 806.0,362.0" fill="none" stroke="#590000" stroke-width="7" stroke-linecap="round" stroke-linejoin="round" filter="url(#bl3)"/>
<path d="M790.0,335.0C791.7,337.8 797.3,345.8 800.0,352.0C802.7,358.2 805.0,368.7 806.0,372.0" fill="none" stroke="#00ff00" stroke-opacity="0.3" stroke-width="1.4" stroke-linecap="round" stroke-linejoin="round" filter="url(#bl1)"/>
<path d="M783.0,338.0C784.8,341.0 791.0,350.7 794.0,356.0C797.0,361.3 799.8,367.7 801.0,370.0" fill="none" stroke="#00ff00" stroke-opacity="0.3" stroke-width="1.4" stroke-linecap="round" stroke-linejoin="round" filter="url(#bl1)"/>
<path d="M776.0,322.0C778.7,324.3 787.5,330.3 792.0,336.0C796.5,341.7 800.3,350.0 803.0,356.0C805.7,362.0 807.2,369.3 808.0,372.0" fill="none" stroke="#4c0000" stroke-width="4" stroke-linecap="round" stroke-linejoin="round" filter="url(#bl1)"/>
<path d="M770.0,328.0C772.7,330.5 781.5,337.7 786.0,343.0C790.5,348.3 794.2,354.8 797.0,360.0C799.8,365.2 802.0,371.7 803.0,374.0" fill="none" stroke="#4c0000" stroke-width="4" stroke-linecap="round" stroke-linejoin="round" filter="url(#bl1)"/>
</g></g>
<path d="M740.0,300.0C745.2,300.4 746.9,305.3 751.0,307.2C755.1,309.1 760.1,309.8 764.7,311.5C769.3,313.2 774.4,315.8 778.4,317.5C782.4,319.2 785.6,319.8 788.8,321.8C791.9,323.8 794.7,326.8 797.3,329.5C799.9,332.2 802.2,334.6 804.2,338.0C806.2,341.4 808.0,346.0 809.4,350.0C810.8,354.0 812.4,358.5 812.8,362.0C813.2,365.5 812.7,368.3 812.0,370.8C811.3,373.3 809.8,375.7 808.5,376.8C807.2,377.9 805.6,378.4 804.2,377.7C802.8,377.0 801.1,374.2 800.0,372.5C798.9,370.8 798.6,369.3 797.3,367.3C796.0,365.3 793.9,363.1 792.2,360.5C790.5,357.9 789.0,354.2 787.0,351.9C785.0,349.6 782.6,349.0 780.0,346.7C777.4,344.4 774.4,340.9 771.6,338.0C768.8,335.1 765.9,331.8 763.0,329.5C760.1,327.2 757.6,325.4 754.4,324.4C751.2,323.4 747.4,323.5 744.0,323.5C740.6,323.5 736.9,324.7 733.8,324.4C730.6,324.1 728.1,322.9 725.0,321.8C721.9,320.7 715.8,320.8 715.0,318.0C714.2,315.2 715.8,308.0 720.0,305.0C724.2,302.0 734.8,299.6 740.0,300.0Z" fill="#000" opacity="0.06"/>
<g clip-path="url(#cpR)"><g filter="url(#lit)"><path d="M152.2,116.0C153.0,117.2 153.8,123.7 154.6,128.0C155.4,132.3 155.8,136.9 157.0,142.0C158.2,147.1 159.5,152.7 161.6,158.5C163.7,164.3 166.5,171.6 169.8,177.0C173.1,182.4 177.5,187.0 181.5,191.0C185.5,195.0 187.0,196.5 194.0,200.8C201.0,205.1 213.6,212.0 223.8,217.0C233.9,222.0 244.6,226.9 255.0,231.0C265.4,235.1 275.6,238.6 286.0,241.5C296.4,244.4 307.0,246.7 317.5,248.4C328.0,250.2 339.4,251.1 348.8,252.0C358.1,252.9 364.4,253.9 373.8,254.0C383.1,254.1 394.6,253.5 405.0,252.5C415.4,251.5 425.6,250.2 436.0,248.0C446.4,245.8 457.0,242.7 467.5,239.4C478.0,236.1 488.3,231.5 498.8,228.4C509.2,225.3 521.3,222.9 530.0,220.6C538.7,218.3 542.2,216.6 551.0,214.4C559.8,212.2 572.0,209.3 582.5,207.5C593.0,205.7 603.3,204.2 613.8,203.4C624.2,202.6 634.6,201.7 645.0,202.5C655.4,203.3 665.6,205.5 676.0,208.0C686.4,210.5 699.2,217.0 707.5,217.5C715.8,218.0 720.8,213.6 726.0,211.0C731.2,208.4 735.8,205.0 738.8,202.0C741.8,199.0 741.8,195.7 744.0,193.0C746.2,190.3 749.2,188.7 752.0,186.0C754.8,183.3 758.2,179.5 761.0,177.0C763.8,174.5 766.3,172.6 769.0,171.0C771.7,169.4 773.3,168.6 777.0,167.6C780.7,166.6 785.5,165.0 791.0,165.0C796.5,165.0 804.2,166.4 809.7,167.6C815.2,168.8 819.9,171.4 823.8,172.0C827.6,172.6 829.1,170.6 833.0,171.0C836.9,171.4 841.9,173.8 847.0,174.6C852.1,175.4 859.7,175.2 863.6,175.8C867.5,176.4 868.7,175.6 870.6,178.0C872.5,180.4 873.4,185.7 875.0,190.0C876.6,194.3 877.7,199.0 880.0,204.0C882.3,209.0 885.2,215.3 889.0,220.0C892.8,224.7 900.0,227.3 903.0,232.0C906.0,236.7 906.2,243.3 907.0,248.4C907.8,253.5 908.6,259.0 908.0,262.5C907.4,266.0 905.7,267.6 903.4,269.5C901.1,271.4 896.4,272.1 894.0,274.0C891.6,275.9 889.8,276.7 889.0,281.0C888.2,285.3 890.3,295.7 889.0,300.0C887.7,304.3 883.6,305.0 881.0,307.0C878.4,309.0 876.1,311.8 873.6,312.0C871.1,312.2 868.8,310.0 866.0,308.0C863.2,306.0 860.8,303.7 857.0,300.0C853.2,296.3 847.7,290.2 843.0,286.0C838.3,281.8 833.7,277.6 829.0,274.5C824.3,271.4 819.7,269.1 815.0,267.5C810.3,265.9 805.7,265.0 801.0,265.0C796.3,265.0 791.3,265.9 787.0,267.5C782.7,269.1 778.9,271.0 775.0,274.5C771.1,278.0 767.3,283.9 763.4,288.6C759.5,293.3 754.1,299.5 751.7,302.6C749.3,305.7 751.0,305.1 749.0,307.0C747.0,308.9 744.0,311.5 740.0,314.0C736.0,316.5 729.7,320.0 725.0,321.8C720.3,323.6 716.2,323.8 712.0,325.0C707.8,326.2 703.7,327.8 700.0,329.0C696.3,330.2 693.4,331.1 690.0,332.0C686.6,332.9 682.1,333.8 679.8,334.5C677.5,335.2 680.8,334.7 676.0,336.0C671.2,337.3 655.3,337.9 651.0,342.5C646.7,347.1 650.8,356.4 650.0,363.4C649.2,370.4 649.8,377.9 646.5,384.5C643.2,391.1 635.5,397.6 630.0,403.0C624.5,408.4 618.2,412.5 613.8,417.0C609.3,421.5 606.0,426.2 603.2,430.0C600.4,433.8 598.4,437.0 596.9,439.8C595.4,442.6 593.5,444.8 594.0,446.9C594.5,449.0 597.4,450.9 599.7,452.5C602.0,454.1 604.2,455.6 608.0,456.7C611.8,457.8 617.5,458.3 622.2,458.8C626.9,459.3 631.6,459.0 636.3,459.5C641.0,460.0 646.1,460.8 650.3,461.7C654.5,462.6 658.3,464.0 661.6,465.2C664.9,466.4 667.4,467.5 670.0,468.7C672.6,469.9 674.2,471.4 677.0,472.2C679.8,473.0 683.9,472.6 687.0,473.6C690.1,474.7 693.1,476.7 695.4,478.5C697.7,480.3 700.2,482.7 700.7,484.2C701.2,485.7 699.6,487.5 698.2,487.7C696.8,487.9 694.4,486.2 692.5,485.6C690.6,485.0 688.9,484.2 687.0,484.2C685.1,484.2 682.7,484.8 681.3,485.6C679.9,486.4 679.9,488.1 678.5,489.0C677.1,489.9 675.2,490.7 672.9,491.2C670.5,491.7 667.0,491.9 664.4,491.9C661.8,491.9 657.9,490.8 657.0,491.2C656.1,491.6 657.1,492.7 658.8,494.0C660.5,495.3 665.3,497.5 667.2,498.9C669.1,500.3 669.9,501.3 670.0,502.5C670.1,503.7 669.4,505.5 668.0,506.0C666.6,506.5 664.1,505.7 661.6,505.3C659.1,504.9 655.8,504.2 653.2,503.9C650.6,503.5 648.9,503.1 646.1,503.2C643.3,503.3 640.3,504.8 636.3,504.6C632.3,504.4 626.9,503.0 622.2,501.8C617.5,500.6 612.0,498.6 608.0,497.5C604.0,496.4 600.2,495.2 598.0,495.5C595.8,495.8 594.5,498.0 594.5,499.4C594.5,500.8 595.9,501.9 597.8,504.0C599.6,506.1 602.2,509.6 605.6,511.9C609.0,514.2 613.3,516.2 618.0,518.0C622.7,519.8 628.5,521.3 633.8,522.8C639.0,524.2 645.8,525.5 649.4,526.7C653.0,527.9 652.7,528.2 655.6,529.8C658.5,531.3 663.7,534.0 666.6,536.0C669.5,538.0 671.9,540.0 672.8,541.6C673.7,543.2 673.2,544.6 672.0,545.5C670.8,546.4 666.2,546.1 665.5,546.8C664.8,547.4 666.8,547.7 668.0,549.4C669.2,551.1 672.0,555.1 672.8,557.0C673.6,558.9 674.1,560.2 672.8,561.0C671.5,561.8 668.9,562.4 665.0,562.0C661.1,561.6 654.6,559.6 649.4,558.8C644.2,557.9 638.3,557.7 633.8,557.0C629.2,556.3 623.8,554.5 622.0,554.5C620.2,554.5 621.9,555.5 622.8,557.0C623.7,558.5 627.0,561.8 627.5,563.4C628.0,565.0 628.4,566.7 626.0,566.6C623.6,566.5 616.6,563.2 613.4,562.7C610.2,562.2 610.1,563.4 607.0,563.4C603.9,563.4 599.4,563.5 594.7,562.7C590.0,561.9 584.2,560.5 579.0,558.8C573.8,557.0 567.2,554.6 563.4,552.5C559.6,550.4 557.7,548.6 556.4,546.2C555.1,543.9 555.2,541.0 555.6,538.4C556.0,535.8 557.7,532.4 558.8,530.6C559.8,528.8 562.5,529.6 562.0,527.5C561.5,525.4 557.4,521.6 555.6,518.0C553.8,514.4 551.9,510.3 551.0,505.6C550.1,500.9 550.3,496.8 550.2,490.0C550.1,483.2 550.5,473.6 550.5,465.0C550.5,456.4 551.3,445.9 550.5,438.4C549.7,430.8 546.8,425.9 545.8,419.7C544.8,413.5 542.6,406.4 544.6,401.0C546.6,395.6 553.0,392.9 557.5,387.0C562.0,381.1 570.9,369.6 571.5,365.8C572.1,362.0 567.9,366.5 561.0,364.4C554.1,362.3 540.4,357.0 530.0,353.4C519.6,349.8 509.2,345.4 498.8,342.5C488.3,339.6 478.0,337.6 467.5,336.0C457.0,334.4 446.4,334.3 436.0,333.0C425.6,331.7 415.4,330.2 405.0,328.4C394.6,326.6 384.2,324.4 373.8,322.0C363.3,319.6 353.0,317.3 342.5,314.0C332.0,310.7 320.4,305.3 311.0,302.0C301.6,298.7 295.3,298.5 286.0,294.0C276.7,289.5 265.4,281.3 255.0,275.0C244.6,268.7 233.9,262.6 223.8,256.0C213.6,249.4 201.0,240.8 194.0,235.5C187.0,230.2 185.9,228.6 181.5,224.0C177.1,219.4 171.8,213.2 167.5,207.7C163.2,202.2 158.9,196.4 155.8,191.0C152.7,185.6 150.6,180.4 148.7,175.0C146.8,169.6 145.2,163.3 144.5,158.5C143.8,153.7 143.8,150.2 144.5,146.0C145.2,141.8 147.9,137.2 148.7,133.0C149.5,128.8 148.9,123.8 149.5,121.0C150.1,118.2 151.3,114.8 152.2,116.0ZM465.6,240.3a1.9,1.9 0 1 1 3.8,0a1.9,1.9 0 1 1 -3.8,0ZM472.2,238.1a1.5,1.5 0 1 1 3.0,0a1.5,1.5 0 1 1 -3.0,0ZM478.1,235.9a1.9,1.9 0 1 1 3.8,0a1.9,1.9 0 1 1 -3.8,0ZM484.8,233.7a1.5,1.5 0 1 1 3.0,0a1.5,1.5 0 1 1 -3.0,0ZM490.6,231.5a1.9,1.9 0 1 1 3.8,0a1.9,1.9 0 1 1 -3.8,0ZM497.2,229.3a1.5,1.5 0 1 1 3.0,0a1.5,1.5 0 1 1 -3.0,0ZM503.1,227.7a1.9,1.9 0 1 1 3.8,0a1.9,1.9 0 1 1 -3.8,0ZM509.8,226.2a1.5,1.5 0 1 1 3.0,0a1.5,1.5 0 1 1 -3.0,0ZM515.6,224.6a1.9,1.9 0 1 1 3.8,0a1.9,1.9 0 1 1 -3.8,0ZM522.2,223.1a1.5,1.5 0 1 1 3.0,0a1.5,1.5 0 1 1 -3.0,0ZM528.1,221.5a1.9,1.9 0 1 1 3.8,0a1.9,1.9 0 1 1 -3.8,0ZM535.5,219.4a1.5,1.5 0 1 1 3.0,0a1.5,1.5 0 1 1 -3.0,0ZM542.1,217.4a1.9,1.9 0 1 1 3.8,0a1.9,1.9 0 1 1 -3.8,0ZM549.5,215.3a1.5,1.5 0 1 1 3.0,0a1.5,1.5 0 1 1 -3.0,0ZM555.4,213.9a1.9,1.9 0 1 1 3.8,0a1.9,1.9 0 1 1 -3.8,0ZM562.1,212.5a1.5,1.5 0 1 1 3.0,0a1.5,1.5 0 1 1 -3.0,0ZM568.0,211.2a1.9,1.9 0 1 1 3.8,0a1.9,1.9 0 1 1 -3.8,0ZM574.7,209.8a1.5,1.5 0 1 1 3.0,0a1.5,1.5 0 1 1 -3.0,0ZM580.6,208.4a1.9,1.9 0 1 1 3.8,0a1.9,1.9 0 1 1 -3.8,0ZM587.2,207.6a1.5,1.5 0 1 1 3.0,0a1.5,1.5 0 1 1 -3.0,0ZM593.1,206.8a1.9,1.9 0 1 1 3.8,0a1.9,1.9 0 1 1 -3.8,0ZM599.8,205.9a1.5,1.5 0 1 1 3.0,0a1.5,1.5 0 1 1 -3.0,0ZM605.6,205.1a1.9,1.9 0 1 1 3.8,0a1.9,1.9 0 1 1 -3.8,0ZM612.2,204.3a1.5,1.5 0 1 1 3.0,0a1.5,1.5 0 1 1 -3.0,0ZM618.1,204.1a1.9,1.9 0 1 1 3.8,0a1.9,1.9 0 1 1 -3.8,0ZM624.8,203.9a1.5,1.5 0 1 1 3.0,0a1.5,1.5 0 1 1 -3.0,0ZM630.6,203.8a1.9,1.9 0 1 1 3.8,0a1.9,1.9 0 1 1 -3.8,0ZM637.2,203.6a1.5,1.5 0 1 1 3.0,0a1.5,1.5 0 1 1 -3.0,0ZM643.1,203.4a1.9,1.9 0 1 1 3.8,0a1.9,1.9 0 1 1 -3.8,0ZM649.7,204.5a1.5,1.5 0 1 1 3.0,0a1.5,1.5 0 1 1 -3.0,0ZM655.5,205.6a1.9,1.9 0 1 1 3.8,0a1.9,1.9 0 1 1 -3.8,0ZM662.1,206.7a1.5,1.5 0 1 1 3.0,0a1.5,1.5 0 1 1 -3.0,0ZM667.9,207.8a1.9,1.9 0 1 1 3.8,0a1.9,1.9 0 1 1 -3.8,0ZM674.5,208.9a1.5,1.5 0 1 1 3.0,0a1.5,1.5 0 1 1 -3.0,0ZM680.4,210.8a1.9,1.9 0 1 1 3.8,0a1.9,1.9 0 1 1 -3.8,0ZM687.1,212.7a1.5,1.5 0 1 1 3.0,0a1.5,1.5 0 1 1 -3.0,0ZM693.0,214.6a1.9,1.9 0 1 1 3.8,0a1.9,1.9 0 1 1 -3.8,0ZM699.7,216.5a1.5,1.5 0 1 1 3.0,0a1.5,1.5 0 1 1 -3.0,0ZM705.6,218.4a1.9,1.9 0 1 1 3.8,0a1.9,1.9 0 1 1 -3.8,0ZM712.2,216.2a1.5,1.5 0 1 1 3.0,0a1.5,1.5 0 1 1 -3.0,0ZM717.9,214.1a1.9,1.9 0 1 1 3.8,0a1.9,1.9 0 1 1 -3.8,0Z" fill="#000"/>
<g clip-path="url(#cpD)">
<g>
<path d="M578.0,262.0C586.3,263.0 600.7,285.3 612.0,298.0C623.3,310.7 639.5,326.8 646.0,338.0C652.5,349.2 652.0,356.0 651.0,365.0C650.0,374.0 646.5,383.7 640.0,392.0C633.5,400.3 620.0,413.3 612.0,415.0C604.0,416.7 598.0,409.2 592.0,402.0C586.0,394.8 581.0,383.7 576.0,372.0C571.0,360.3 564.3,345.3 562.0,332.0C559.7,318.7 559.3,303.7 562.0,292.0C564.7,280.3 569.7,261.0 578.0,262.0Z" fill="#8c0000" filter="url(#bl6)"/>
<path d="M628.0,400.0C623.3,405.8 608.8,423.3 600.0,435.0C591.2,446.7 580.0,458.3 575.0,470.0C570.0,481.7 568.3,495.0 570.0,505.0C571.7,515.0 582.5,525.8 585.0,530.0" fill="none" stroke="#7f0000" stroke-width="14" stroke-linecap="round" stroke-linejoin="round" filter="url(#bl3)"/>
<path d="M585.0,508.0C590.0,510.7 605.0,519.8 615.0,524.0C625.0,528.2 636.8,530.2 645.0,533.0C653.2,535.8 660.8,539.7 664.0,541.0" fill="none" stroke="#7f0000" stroke-width="7" stroke-linecap="round" stroke-linejoin="round" filter="url(#bl1)"/>
<path d="M575.0,526.0C580.8,528.3 599.2,535.8 610.0,540.0C620.8,544.2 631.0,548.3 640.0,551.0C649.0,553.7 660.0,555.2 664.0,556.0" fill="none" stroke="#7f0000" stroke-width="8" stroke-linecap="round" stroke-linejoin="round" filter="url(#bl1)"/>
<path d="M562.0,540.0C566.7,542.0 581.0,548.8 590.0,552.0C599.0,555.2 611.7,557.8 616.0,559.0" fill="none" stroke="#7f0000" stroke-width="8" stroke-linecap="round" stroke-linejoin="round" filter="url(#bl1)"/>
<path d="M602.0,456.0C607.5,457.3 625.0,461.5 635.0,464.0C645.0,466.5 652.8,468.2 662.0,471.0C671.2,473.8 685.3,479.3 690.0,481.0" fill="none" stroke="#720000" stroke-width="8" stroke-linecap="round" stroke-linejoin="round" filter="url(#bl1)"/>
<path d="M600.0,486.0C604.2,487.3 616.7,492.0 625.0,494.0C633.3,496.0 643.5,496.8 650.0,498.0C656.5,499.2 661.7,500.5 664.0,501.0" fill="none" stroke="#7f0000" stroke-width="8" stroke-linecap="round" stroke-linejoin="round" filter="url(#bl1)"/>
<path d="M802.0,186.0C804.7,187.7 812.3,192.7 818.0,196.0C823.7,199.3 829.7,201.3 836.0,206.0C842.3,210.7 849.7,218.7 856.0,224.0C862.3,229.3 871.0,235.7 874.0,238.0" fill="none" stroke="#b20000" stroke-width="4" stroke-linecap="round" stroke-linejoin="round" filter="url(#bl1)"/>
<path d="M790.0,200.0C791.7,204.2 794.2,218.3 800.0,225.0C805.8,231.7 820.8,237.5 825.0,240.0" fill="none" stroke="#660000" stroke-width="8" stroke-linecap="round" stroke-linejoin="round" filter="url(#bl3)"/>
<path d="M850.0,232.0C859.2,229.7 886.2,232.2 895.0,236.0C903.8,239.8 903.8,249.7 903.0,255.0C902.2,260.3 897.2,266.8 890.0,268.0C882.8,269.2 868.3,265.0 860.0,262.0C851.7,259.0 841.7,255.0 840.0,250.0C838.3,245.0 840.8,234.3 850.0,232.0Z" fill="#590000" filter="url(#bl3)"/>
<path d="M800.0,262.0C805.0,263.3 820.8,265.0 830.0,270.0C839.2,275.0 847.7,286.0 855.0,292.0C862.3,298.0 870.8,303.7 874.0,306.0" fill="none" stroke="#720000" stroke-width="5" stroke-linecap="round" stroke-linejoin="round" filter="url(#bl1)"/>
<circle cx="498.8" cy="230.6" r="1.8" fill="#a00000"/>
<circle cx="504.0" cy="229.3" r="1.8" fill="#a00000"/>
<circle cx="509.2" cy="228.0" r="1.8" fill="#a00000"/>
<circle cx="514.4" cy="226.7" r="1.8" fill="#a00000"/>
<circle cx="519.6" cy="225.4" r="1.8" fill="#a00000"/>
<circle cx="524.8" cy="224.1" r="1.8" fill="#a00000"/>
<circle cx="530.0" cy="222.8" r="1.8" fill="#a00000"/>
<circle cx="535.2" cy="221.2" r="1.8" fill="#a00000"/>
<circle cx="540.5" cy="219.7" r="1.8" fill="#a00000"/>
<circle cx="545.8" cy="218.1" r="1.8" fill="#a00000"/>
<circle cx="551.0" cy="216.6" r="1.8" fill="#a00000"/>
<circle cx="556.2" cy="215.4" r="1.8" fill="#a00000"/>
<circle cx="561.5" cy="214.3" r="1.8" fill="#a00000"/>
<circle cx="566.8" cy="213.1" r="1.8" fill="#a00000"/>
<circle cx="572.0" cy="212.0" r="1.8" fill="#a00000"/>
<circle cx="577.2" cy="210.8" r="1.8" fill="#a00000"/>
<circle cx="582.5" cy="209.7" r="1.8" fill="#a00000"/>
<circle cx="587.7" cy="209.0" r="1.8" fill="#a00000"/>
<circle cx="592.9" cy="208.3" r="1.8" fill="#a00000"/>
<circle cx="598.1" cy="207.6" r="1.8" fill="#a00000"/>
<circle cx="603.3" cy="207.0" r="1.8" fill="#a00000"/>
<circle cx="608.5" cy="206.3" r="1.8" fill="#a00000"/>
<circle cx="613.8" cy="205.6" r="1.8" fill="#a00000"/>
<circle cx="619.0" cy="205.4" r="1.8" fill="#a00000"/>
<circle cx="624.2" cy="205.3" r="1.8" fill="#a00000"/>
<circle cx="629.4" cy="205.1" r="1.8" fill="#a00000"/>
<circle cx="634.6" cy="205.0" r="1.8" fill="#a00000"/>
<circle cx="639.8" cy="204.8" r="1.8" fill="#a00000"/>
<circle cx="645.0" cy="204.7" r="1.8" fill="#a00000"/>
<circle cx="650.2" cy="205.6" r="1.8" fill="#a00000"/>
<circle cx="655.3" cy="206.5" r="1.8" fill="#a00000"/>
<circle cx="660.5" cy="207.4" r="1.8" fill="#a00000"/>
<circle cx="665.7" cy="208.4" r="1.8" fill="#a00000"/>
<circle cx="670.8" cy="209.3" r="1.8" fill="#a00000"/>
<circle cx="676.0" cy="210.2" r="1.8" fill="#a00000"/>
<circle cx="681.2" cy="211.8" r="1.8" fill="#a00000"/>
<circle cx="686.5" cy="213.4" r="1.8" fill="#a00000"/>
<circle cx="691.8" cy="214.9" r="1.8" fill="#a00000"/>
<circle cx="697.0" cy="216.5" r="1.8" fill="#a00000"/>
<circle cx="702.2" cy="218.1" r="1.8" fill="#a00000"/>
<path d="M567.0,255.0C570.0,259.2 577.8,271.7 585.0,280.0C592.2,288.3 601.7,296.7 610.0,305.0C618.3,313.3 628.5,323.2 635.0,330.0C641.5,336.8 646.7,343.3 649.0,346.0" fill="none" stroke="#00ff00" stroke-opacity="0.55" stroke-width="1.8" stroke-linecap="round" stroke-linejoin="round"/>
<path d="M583.0,380.0C580.0,383.7 568.8,392.0 565.0,402.0C561.2,412.0 560.3,428.7 560.0,440.0C559.7,451.3 562.5,465.0 563.0,470.0" fill="none" stroke="#00ff00" stroke-opacity="0.6" stroke-width="4" stroke-linecap="round" stroke-linejoin="round" filter="url(#bl1)"/>
<path d="M752,188 Q737,232 741,300" fill="none" stroke="#00ff00" stroke-opacity="0.55" stroke-width="1.6" stroke-linecap="round" stroke-linejoin="round"/>
<path d="M760,179 Q744,230 751,292" fill="none" stroke="#00ff00" stroke-opacity="0.55" stroke-width="1.6" stroke-linecap="round" stroke-linejoin="round"/>
<path d="M768,173 Q751,226 761,283" fill="none" stroke="#00ff00" stroke-opacity="0.55" stroke-width="1.6" stroke-linecap="round" stroke-linejoin="round"/>
<path d="M777,170 Q759,222 771,273" fill="none" stroke="#00ff00" stroke-opacity="0.55" stroke-width="1.6" stroke-linecap="round" stroke-linejoin="round"/>
<path d="M786,168 Q767,216 781,265" fill="none" stroke="#00ff00" stroke-opacity="0.55" stroke-width="1.6" stroke-linecap="round" stroke-linejoin="round"/>
<path d="M794,170 Q778,205 789,242" fill="none" stroke="#00ff00" stroke-opacity="0.55" stroke-width="1.6" stroke-linecap="round" stroke-linejoin="round"/>
<path d="M742,300 Q725,315 700,326" fill="none" stroke="#00ff00" stroke-opacity="0.45" stroke-width="1.6" stroke-linecap="round" stroke-linejoin="round"/>
<path d="M752,290 Q735,312 712,322" fill="none" stroke="#00ff00" stroke-opacity="0.45" stroke-width="1.6" stroke-linecap="round" stroke-linejoin="round"/>
<path d="M735,285 Q715,305 695,312" fill="none" stroke="#00ff00" stroke-opacity="0.45" stroke-width="1.6" stroke-linecap="round" stroke-linejoin="round"/>
<path d="M500,338 Q540,345 572,364" fill="none" stroke="#00ff00" stroke-opacity="0.5" stroke-width="1.6" stroke-linecap="round" stroke-linejoin="round"/>
<path d="M520,335 Q555,345 580,366" fill="none" stroke="#00ff00" stroke-opacity="0.5" stroke-width="1.6" stroke-linecap="round" stroke-linejoin="round"/>
<path d="M545,338 Q575,350 590,372" fill="none" stroke="#00ff00" stroke-opacity="0.5" stroke-width="1.6" stroke-linecap="round" stroke-linejoin="round"/>
<path d="M650,330 Q665,332 680,334" fill="none" stroke="#00ff00" stroke-opacity="0.4" stroke-width="1.4" stroke-linecap="round" stroke-linejoin="round"/>
<path d="M648,322 Q665,322 678,322" fill="none" stroke="#00ff00" stroke-opacity="0.4" stroke-width="1.4" stroke-linecap="round" stroke-linejoin="round"/>
<path d="M798.0,234.0C800.3,235.7 807.2,241.2 812.0,244.0C816.8,246.8 824.5,249.8 827.0,251.0" fill="none" stroke="#00ff00" stroke-opacity="0.5" stroke-width="1.8" stroke-linecap="round" stroke-linejoin="round"/>
<path d="M812,206 Q819,201 827,208 Q821,215 812,206Z" fill="none" stroke="#00ff00" stroke-opacity="0.7" stroke-width="1.5" stroke-linecap="round" stroke-linejoin="round"/>
<path d="M580.0,518.0C584.7,520.7 598.0,529.8 608.0,534.0C618.0,538.2 631.3,540.7 640.0,543.0C648.7,545.3 656.7,547.2 660.0,548.0" fill="none" stroke="#00ff00" stroke-opacity="0.6" stroke-width="1.5" stroke-linecap="round" stroke-linejoin="round"/>
<path d="M566.0,534.0C570.0,536.0 582.3,543.3 590.0,546.0C597.7,548.7 608.3,549.3 612.0,550.0" fill="none" stroke="#00ff00" stroke-opacity="0.6" stroke-width="1.5" stroke-linecap="round" stroke-linejoin="round"/>
<path d="M600.0,472.0C605.0,473.5 620.8,478.2 630.0,481.0C639.2,483.8 650.8,487.7 655.0,489.0" fill="none" stroke="#00ff00" stroke-opacity="0.6" stroke-width="1.5" stroke-linecap="round" stroke-linejoin="round"/>
</g>
</g></g></g>
<g clip-path="url(#cpR)"><g clip-path="url(#cpD)">
<rect x="194" y="110" width="740" height="470" fill="url(#gB)"/>
<path d="M152.2,116.0C153.0,117.2 153.8,123.7 154.6,128.0C155.4,132.3 155.8,136.9 157.0,142.0C158.2,147.1 159.5,152.7 161.6,158.5C163.7,164.3 166.5,171.6 169.8,177.0C173.1,182.4 177.5,187.0 181.5,191.0C185.5,195.0 187.0,196.5 194.0,200.8C201.0,205.1 213.6,212.0 223.8,217.0C233.9,222.0 244.6,226.9 255.0,231.0C265.4,235.1 275.6,238.6 286.0,241.5C296.4,244.4 307.0,246.7 317.5,248.4C328.0,250.2 339.4,251.1 348.8,252.0C358.1,252.9 364.4,253.9 373.8,254.0C383.1,254.1 394.6,253.5 405.0,252.5C415.4,251.5 425.6,250.2 436.0,248.0C446.4,245.8 457.0,242.7 467.5,239.4C478.0,236.1 488.3,231.5 498.8,228.4C509.2,225.3 521.3,222.9 530.0,220.6C538.7,218.3 542.2,216.6 551.0,214.4C559.8,212.2 572.0,209.3 582.5,207.5C593.0,205.7 603.3,204.2 613.8,203.4C624.2,202.6 634.6,201.7 645.0,202.5C655.4,203.3 665.6,205.5 676.0,208.0C686.4,210.5 699.2,217.0 707.5,217.5C715.8,218.0 720.8,213.6 726.0,211.0C731.2,208.4 735.8,205.0 738.8,202.0C741.8,199.0 741.8,195.7 744.0,193.0C746.2,190.3 749.2,188.7 752.0,186.0C754.8,183.3 758.2,179.5 761.0,177.0C763.8,174.5 766.3,172.6 769.0,171.0C771.7,169.4 773.3,168.6 777.0,167.6C780.7,166.6 785.5,165.0 791.0,165.0C796.5,165.0 804.2,166.4 809.7,167.6C815.2,168.8 819.9,171.4 823.8,172.0C827.6,172.6 829.1,170.6 833.0,171.0C836.9,171.4 841.9,173.8 847.0,174.6C852.1,175.4 859.7,175.2 863.6,175.8C867.5,176.4 868.7,175.6 870.6,178.0C872.5,180.4 873.4,185.7 875.0,190.0C876.6,194.3 877.7,199.0 880.0,204.0C882.3,209.0 885.2,215.3 889.0,220.0C892.8,224.7 900.0,227.3 903.0,232.0C906.0,236.7 906.2,243.3 907.0,248.4C907.8,253.5 908.6,259.0 908.0,262.5C907.4,266.0 905.7,267.6 903.4,269.5C901.1,271.4 896.4,272.1 894.0,274.0C891.6,275.9 889.8,276.7 889.0,281.0C888.2,285.3 890.3,295.7 889.0,300.0C887.7,304.3 883.6,305.0 881.0,307.0C878.4,309.0 876.1,311.8 873.6,312.0C871.1,312.2 868.8,310.0 866.0,308.0C863.2,306.0 860.8,303.7 857.0,300.0C853.2,296.3 847.7,290.2 843.0,286.0C838.3,281.8 833.7,277.6 829.0,274.5C824.3,271.4 819.7,269.1 815.0,267.5C810.3,265.9 805.7,265.0 801.0,265.0C796.3,265.0 791.3,265.9 787.0,267.5C782.7,269.1 778.9,271.0 775.0,274.5C771.1,278.0 767.3,283.9 763.4,288.6C759.5,293.3 754.1,299.5 751.7,302.6C749.3,305.7 751.0,305.1 749.0,307.0C747.0,308.9 744.0,311.5 740.0,314.0C736.0,316.5 729.7,320.0 725.0,321.8C720.3,323.6 716.2,323.8 712.0,325.0C707.8,326.2 703.7,327.8 700.0,329.0C696.3,330.2 693.4,331.1 690.0,332.0C686.6,332.9 682.1,333.8 679.8,334.5C677.5,335.2 680.8,334.7 676.0,336.0C671.2,337.3 655.3,337.9 651.0,342.5C646.7,347.1 650.8,356.4 650.0,363.4C649.2,370.4 649.8,377.9 646.5,384.5C643.2,391.1 635.5,397.6 630.0,403.0C624.5,408.4 618.2,412.5 613.8,417.0C609.3,421.5 606.0,426.2 603.2,430.0C600.4,433.8 598.4,437.0 596.9,439.8C595.4,442.6 593.5,444.8 594.0,446.9C594.5,449.0 597.4,450.9 599.7,452.5C602.0,454.1 604.2,455.6 608.0,456.7C611.8,457.8 617.5,458.3 622.2,458.8C626.9,459.3 631.6,459.0 636.3,459.5C641.0,460.0 646.1,460.8 650.3,461.7C654.5,462.6 658.3,464.0 661.6,465.2C664.9,466.4 667.4,467.5 670.0,468.7C672.6,469.9 674.2,471.4 677.0,472.2C679.8,473.0 683.9,472.6 687.0,473.6C690.1,474.7 693.1,476.7 695.4,478.5C697.7,480.3 700.2,482.7 700.7,484.2C701.2,485.7 699.6,487.5 698.2,487.7C696.8,487.9 694.4,486.2 692.5,485.6C690.6,485.0 688.9,484.2 687.0,484.2C685.1,484.2 682.7,484.8 681.3,485.6C679.9,486.4 679.9,488.1 678.5,489.0C677.1,489.9 675.2,490.7 672.9,491.2C670.5,491.7 667.0,491.9 664.4,491.9C661.8,491.9 657.9,490.8 657.0,491.2C656.1,491.6 657.1,492.7 658.8,494.0C660.5,495.3 665.3,497.5 667.2,498.9C669.1,500.3 669.9,501.3 670.0,502.5C670.1,503.7 669.4,505.5 668.0,506.0C666.6,506.5 664.1,505.7 661.6,505.3C659.1,504.9 655.8,504.2 653.2,503.9C650.6,503.5 648.9,503.1 646.1,503.2C643.3,503.3 640.3,504.8 636.3,504.6C632.3,504.4 626.9,503.0 622.2,501.8C617.5,500.6 612.0,498.6 608.0,497.5C604.0,496.4 600.2,495.2 598.0,495.5C595.8,495.8 594.5,498.0 594.5,499.4C594.5,500.8 595.9,501.9 597.8,504.0C599.6,506.1 602.2,509.6 605.6,511.9C609.0,514.2 613.3,516.2 618.0,518.0C622.7,519.8 628.5,521.3 633.8,522.8C639.0,524.2 645.8,525.5 649.4,526.7C653.0,527.9 652.7,528.2 655.6,529.8C658.5,531.3 663.7,534.0 666.6,536.0C669.5,538.0 671.9,540.0 672.8,541.6C673.7,543.2 673.2,544.6 672.0,545.5C670.8,546.4 666.2,546.1 665.5,546.8C664.8,547.4 666.8,547.7 668.0,549.4C669.2,551.1 672.0,555.1 672.8,557.0C673.6,558.9 674.1,560.2 672.8,561.0C671.5,561.8 668.9,562.4 665.0,562.0C661.1,561.6 654.6,559.6 649.4,558.8C644.2,557.9 638.3,557.7 633.8,557.0C629.2,556.3 623.8,554.5 622.0,554.5C620.2,554.5 621.9,555.5 622.8,557.0C623.7,558.5 627.0,561.8 627.5,563.4C628.0,565.0 628.4,566.7 626.0,566.6C623.6,566.5 616.6,563.2 613.4,562.7C610.2,562.2 610.1,563.4 607.0,563.4C603.9,563.4 599.4,563.5 594.7,562.7C590.0,561.9 584.2,560.5 579.0,558.8C573.8,557.0 567.2,554.6 563.4,552.5C559.6,550.4 557.7,548.6 556.4,546.2C555.1,543.9 555.2,541.0 555.6,538.4C556.0,535.8 557.7,532.4 558.8,530.6C559.8,528.8 562.5,529.6 562.0,527.5C561.5,525.4 557.4,521.6 555.6,518.0C553.8,514.4 551.9,510.3 551.0,505.6C550.1,500.9 550.3,496.8 550.2,490.0C550.1,483.2 550.5,473.6 550.5,465.0C550.5,456.4 551.3,445.9 550.5,438.4C549.7,430.8 546.8,425.9 545.8,419.7C544.8,413.5 542.6,406.4 544.6,401.0C546.6,395.6 553.0,392.9 557.5,387.0C562.0,381.1 570.9,369.6 571.5,365.8C572.1,362.0 567.9,366.5 561.0,364.4C554.1,362.3 540.4,357.0 530.0,353.4C519.6,349.8 509.2,345.4 498.8,342.5C488.3,339.6 478.0,337.6 467.5,336.0C457.0,334.4 446.4,334.3 436.0,333.0C425.6,331.7 415.4,330.2 405.0,328.4C394.6,326.6 384.2,324.4 373.8,322.0C363.3,319.6 353.0,317.3 342.5,314.0C332.0,310.7 320.4,305.3 311.0,302.0C301.6,298.7 295.3,298.5 286.0,294.0C276.7,289.5 265.4,281.3 255.0,275.0C244.6,268.7 233.9,262.6 223.8,256.0C213.6,249.4 201.0,240.8 194.0,235.5C187.0,230.2 185.9,228.6 181.5,224.0C177.1,219.4 171.8,213.2 167.5,207.7C163.2,202.2 158.9,196.4 155.8,191.0C152.7,185.6 150.6,180.4 148.7,175.0C146.8,169.6 145.2,163.3 144.5,158.5C143.8,153.7 143.8,150.2 144.5,146.0C145.2,141.8 147.9,137.2 148.7,133.0C149.5,128.8 148.9,123.8 149.5,121.0C150.1,118.2 151.3,114.8 152.2,116.0ZM465.6,240.3a1.9,1.9 0 1 1 3.8,0a1.9,1.9 0 1 1 -3.8,0ZM472.2,238.1a1.5,1.5 0 1 1 3.0,0a1.5,1.5 0 1 1 -3.0,0ZM478.1,235.9a1.9,1.9 0 1 1 3.8,0a1.9,1.9 0 1 1 -3.8,0ZM484.8,233.7a1.5,1.5 0 1 1 3.0,0a1.5,1.5 0 1 1 -3.0,0ZM490.6,231.5a1.9,1.9 0 1 1 3.8,0a1.9,1.9 0 1 1 -3.8,0ZM497.2,229.3a1.5,1.5 0 1 1 3.0,0a1.5,1.5 0 1 1 -3.0,0ZM503.1,227.7a1.9,1.9 0 1 1 3.8,0a1.9,1.9 0 1 1 -3.8,0ZM509.8,226.2a1.5,1.5 0 1 1 3.0,0a1.5,1.5 0 1 1 -3.0,0ZM515.6,224.6a1.9,1.9 0 1 1 3.8,0a1.9,1.9 0 1 1 -3.8,0ZM522.2,223.1a1.5,1.5 0 1 1 3.0,0a1.5,1.5 0 1 1 -3.0,0ZM528.1,221.5a1.9,1.9 0 1 1 3.8,0a1.9,1.9 0 1 1 -3.8,0ZM535.5,219.4a1.5,1.5 0 1 1 3.0,0a1.5,1.5 0 1 1 -3.0,0ZM542.1,217.4a1.9,1.9 0 1 1 3.8,0a1.9,1.9 0 1 1 -3.8,0ZM549.5,215.3a1.5,1.5 0 1 1 3.0,0a1.5,1.5 0 1 1 -3.0,0ZM555.4,213.9a1.9,1.9 0 1 1 3.8,0a1.9,1.9 0 1 1 -3.8,0ZM562.1,212.5a1.5,1.5 0 1 1 3.0,0a1.5,1.5 0 1 1 -3.0,0ZM568.0,211.2a1.9,1.9 0 1 1 3.8,0a1.9,1.9 0 1 1 -3.8,0ZM574.7,209.8a1.5,1.5 0 1 1 3.0,0a1.5,1.5 0 1 1 -3.0,0ZM580.6,208.4a1.9,1.9 0 1 1 3.8,0a1.9,1.9 0 1 1 -3.8,0ZM587.2,207.6a1.5,1.5 0 1 1 3.0,0a1.5,1.5 0 1 1 -3.0,0ZM593.1,206.8a1.9,1.9 0 1 1 3.8,0a1.9,1.9 0 1 1 -3.8,0ZM599.8,205.9a1.5,1.5 0 1 1 3.0,0a1.5,1.5 0 1 1 -3.0,0ZM605.6,205.1a1.9,1.9 0 1 1 3.8,0a1.9,1.9 0 1 1 -3.8,0ZM612.2,204.3a1.5,1.5 0 1 1 3.0,0a1.5,1.5 0 1 1 -3.0,0ZM618.1,204.1a1.9,1.9 0 1 1 3.8,0a1.9,1.9 0 1 1 -3.8,0ZM624.8,203.9a1.5,1.5 0 1 1 3.0,0a1.5,1.5 0 1 1 -3.0,0ZM630.6,203.8a1.9,1.9 0 1 1 3.8,0a1.9,1.9 0 1 1 -3.8,0ZM637.2,203.6a1.5,1.5 0 1 1 3.0,0a1.5,1.5 0 1 1 -3.0,0ZM643.1,203.4a1.9,1.9 0 1 1 3.8,0a1.9,1.9 0 1 1 -3.8,0ZM649.7,204.5a1.5,1.5 0 1 1 3.0,0a1.5,1.5 0 1 1 -3.0,0ZM655.5,205.6a1.9,1.9 0 1 1 3.8,0a1.9,1.9 0 1 1 -3.8,0ZM662.1,206.7a1.5,1.5 0 1 1 3.0,0a1.5,1.5 0 1 1 -3.0,0ZM667.9,207.8a1.9,1.9 0 1 1 3.8,0a1.9,1.9 0 1 1 -3.8,0ZM674.5,208.9a1.5,1.5 0 1 1 3.0,0a1.5,1.5 0 1 1 -3.0,0ZM680.4,210.8a1.9,1.9 0 1 1 3.8,0a1.9,1.9 0 1 1 -3.8,0ZM687.1,212.7a1.5,1.5 0 1 1 3.0,0a1.5,1.5 0 1 1 -3.0,0ZM693.0,214.6a1.9,1.9 0 1 1 3.8,0a1.9,1.9 0 1 1 -3.8,0ZM699.7,216.5a1.5,1.5 0 1 1 3.0,0a1.5,1.5 0 1 1 -3.0,0ZM705.6,218.4a1.9,1.9 0 1 1 3.8,0a1.9,1.9 0 1 1 -3.8,0ZM712.2,216.2a1.5,1.5 0 1 1 3.0,0a1.5,1.5 0 1 1 -3.0,0ZM717.9,214.1a1.9,1.9 0 1 1 3.8,0a1.9,1.9 0 1 1 -3.8,0Z" fill="none" stroke="#4a4a4a" stroke-opacity="0.3" stroke-width="2.2" filter="url(#bl1)"/>
<path d="M194,232 L255,268 L311,296 L373,316 L436,328 L500,338 L560,360 L575,372 L560,340 L500,318 L436,308 L373,298 L311,280 L255,252 L194,220Z" fill="#585858" opacity="0.62" filter="url(#bl6)"/>
<path d="M572,372 L590,378 L572,405 L566,440 L560,440 L562,400Z" fill="#626262" opacity="0.45" filter="url(#bl3)"/>
<path d="M640,345 L680,336 L690,320 L660,322 L640,330Z" fill="#626262" opacity="0.5" filter="url(#bl3)"/>
<path d="M260,236 L330,254 L420,258 L500,236 L580,212 L650,207 L700,220 L690,250 L600,250 L500,275 L400,290 L320,282 L260,258Z" fill="#c4c4c4" opacity="0.12" filter="url(#bl6)"/>
<path d="M770,175 L830,175 L870,182 L895,230 L900,255 L860,250 L820,230 L780,215Z" fill="#c8c8c8" opacity="0.3" filter="url(#bl6)"/>
<path d="M590,380 L640,360 L640,385 L600,430 L585,430Z" fill="#c0c0c0" opacity="0.5" filter="url(#bl3)"/>
<path d="M190,196 L260,230 L340,250 L340,285 L260,262 L190,226Z" fill="#d4d4d4" opacity="0.3" filter="url(#bl6)"/>
<path d="M540,395 L600,380 L640,400 L610,440 L710,470 L710,500 L680,520 L685,570 L545,570Z" fill="#dcdcdc" opacity="0.33" filter="url(#bl6)"/>
<path d="M812,262 Q785,262 766,284 Q748,308 722,320 Q708,326 694,329" fill="none" stroke="#7e7e7e" stroke-opacity="0.7" stroke-width="20" stroke-linecap="round" filter="url(#bl3)"/>
<path d="M806.0,258.0 Q782.0,258.0 762.0,281.0 Q744.0,304.0 718.0,316.0" fill="none" stroke="#555" stroke-opacity="0.5" stroke-width="1.1" filter="url(#bl1)"/>
<path d="M803.9,253.8 Q777.8,253.8 757.8,276.8 Q739.8,299.8 715.5,311.8" fill="none" stroke="#555" stroke-opacity="0.4" stroke-width="1" filter="url(#bl1)"/>
<path d="M801.8,249.6 Q773.6,249.6 753.6,272.6 Q735.6,295.6 713.0,307.6" fill="none" stroke="#555" stroke-opacity="0.45" stroke-width="1.1" filter="url(#bl1)"/>
<path d="M799.7,245.4 Q769.4,245.4 749.4,268.4 Q731.4,291.4 710.4,303.4" fill="none" stroke="#555" stroke-opacity="0.35" stroke-width="1" filter="url(#bl1)"/>
</g></g>
<g mask="url(#mFA)"><g filter="url(#lits)">
<path d="M686.0,268.0C688.2,264.5 693.3,263.7 697.0,264.0C700.7,264.3 705.5,265.7 708.0,270.0C710.5,274.3 711.6,284.2 712.0,290.0C712.4,295.8 711.4,300.0 710.6,305.0C709.9,310.0 708.6,316.2 707.5,320.0C706.4,323.8 703.6,325.6 704.0,328.0C704.4,330.4 707.3,332.5 710.0,334.5C712.7,336.5 716.8,337.8 720.3,340.0C723.8,342.2 727.4,345.2 731.0,347.8C734.6,350.4 738.6,352.7 742.0,355.6C745.4,358.5 749.0,361.9 751.6,365.0C754.2,368.1 756.0,370.7 757.8,374.4C759.6,378.1 761.0,383.4 762.5,387.0C764.0,390.6 766.0,392.7 767.0,396.0C768.0,399.3 768.6,403.6 768.8,407.0C768.9,410.4 768.5,413.7 768.0,416.6C767.5,419.5 766.5,422.4 765.6,424.4C764.7,426.3 763.5,428.0 762.5,428.3C761.5,428.6 760.2,427.7 759.4,426.0C758.6,424.3 758.4,421.4 757.8,418.0C757.1,414.6 756.1,408.2 755.5,405.6C754.9,403.0 754.6,402.0 754.0,402.5C753.4,403.0 752.4,406.2 751.6,408.8C750.8,411.3 750.2,415.4 749.2,418.0C748.2,420.6 746.7,422.1 745.3,424.4C743.9,426.7 742.3,430.4 740.6,432.0C738.9,433.6 736.4,434.0 735.0,433.8C733.6,433.5 732.5,432.4 732.5,430.6C732.5,428.8 734.2,425.7 735.0,422.8C735.8,419.9 736.5,416.8 737.5,413.4C738.5,410.0 740.2,405.9 741.0,402.5C741.8,399.1 741.9,394.8 742.0,393.0C742.1,391.2 741.9,390.5 741.4,391.6C740.9,392.7 740.3,396.3 739.0,399.4C737.7,402.5 735.4,407.2 733.6,410.3C731.8,413.4 730.0,416.1 728.0,418.0C726.0,419.9 723.6,421.7 721.9,422.0C720.2,422.3 718.5,421.1 718.0,419.7C717.5,418.3 717.9,416.3 718.8,413.4C719.6,410.5 721.6,406.4 723.4,402.5C725.2,398.6 728.1,393.9 729.7,390.0C731.3,386.1 732.5,381.9 732.8,379.0C733.1,376.1 732.3,374.9 731.2,372.8C730.2,370.7 728.7,368.7 726.6,366.6C724.5,364.5 721.9,362.3 718.8,360.3C715.6,358.3 710.9,356.2 707.8,354.8C704.7,353.4 703.0,353.0 700.0,351.7C697.0,350.4 693.0,349.1 690.0,347.0C687.0,344.9 683.7,342.2 682.0,339.0C680.3,335.8 680.0,332.0 679.8,328.0C679.6,324.0 680.5,319.3 681.0,315.0C681.5,310.7 682.5,307.0 683.0,302.0C683.5,297.0 683.5,290.7 684.0,285.0C684.5,279.3 683.8,271.5 686.0,268.0Z" fill="#000"/>
<g clip-path="url(#cpFA)">
<path d="M696.0,275.0C696.3,279.2 698.7,291.2 698.0,300.0C697.3,308.8 693.0,323.3 692.0,328.0" fill="none" stroke="#660000" stroke-width="10" stroke-linecap="round" stroke-linejoin="round" filter="url(#bl3)"/>
<path d="M690.0,340.0C693.7,341.8 704.0,346.3 712.0,351.0C720.0,355.7 733.7,365.2 738.0,368.0" fill="none" stroke="#590000" stroke-width="8" stroke-linecap="round" stroke-linejoin="round" filter="url(#bl3)"/>
<path d="M731.0,380.0C730.2,383.3 727.7,393.8 726.0,400.0C724.3,406.2 721.8,414.2 721.0,417.0" fill="none" stroke="#720000" stroke-width="4.5" stroke-linecap="round" stroke-linejoin="round" filter="url(#bl1)"/>
<path d="M744.0,394.0C743.5,397.0 742.3,406.2 741.0,412.0C739.7,417.8 736.8,426.2 736.0,429.0" fill="none" stroke="#720000" stroke-width="4.5" stroke-linecap="round" stroke-linejoin="round" filter="url(#bl1)"/>
<path d="M757.0,388.0C758.0,391.0 762.0,400.0 763.0,406.0C764.0,412.0 763.0,421.0 763.0,424.0" fill="none" stroke="#720000" stroke-width="4.5" stroke-linecap="round" stroke-linejoin="round" filter="url(#bl1)"/>
<path d="M741.0,372.0C741.1,375.3 741.4,388.7 741.5,392.0" fill="none" stroke="#00ff00" stroke-opacity="0.3" stroke-width="1.4" stroke-linecap="round" stroke-linejoin="round" filter="url(#bl1)"/>
<path d="M750.0,374.0C750.7,378.7 753.3,397.3 754.0,402.0" fill="none" stroke="#00ff00" stroke-opacity="0.3" stroke-width="1.4" stroke-linecap="round" stroke-linejoin="round" filter="url(#bl1)"/>
</g></g></g>
<path d="M826.7,251.0C827.9,249.8 839.6,260.5 845.5,262.8C851.4,265.1 855.4,263.3 862.0,265.0C868.6,266.7 880.7,269.5 885.0,273.0C889.3,276.5 887.6,281.8 888.0,286.0C888.4,290.2 888.8,295.2 887.6,298.0C886.4,300.8 883.4,303.0 880.6,302.6C877.8,302.2 875.7,299.1 871.0,295.6C866.3,292.1 857.9,285.8 852.5,281.5C847.1,277.2 842.7,274.9 838.4,269.8C834.1,264.7 825.5,252.2 826.7,251.0Z" fill="#3a9c9c"/>
<path d="M826.7,251.6L831.3,252.8L829.3,261.0L827.8,260.7Z" fill="#a8a8a8"/>
<path d="M830.4,253.8L835.0,255.0L833.0,260.7L831.5,260.4Z" fill="#a8a8a8"/>
<path d="M834.0,256.1L838.6,257.3L836.6,264.5L835.1,264.2Z" fill="#a8a8a8"/>
<path d="M837.7,258.3L842.3,259.5L840.3,264.7L838.8,264.4Z" fill="#a8a8a8"/>
<path d="M841.4,260.6L846.0,261.8L844.0,270.0L842.5,269.7Z" fill="#a8a8a8"/>
<path d="M845.3,262.0L849.9,263.2L847.9,268.9L846.4,268.6Z" fill="#a8a8a8"/>
<path d="M849.6,262.6L854.2,263.8L852.2,271.0L850.7,270.7Z" fill="#a8a8a8"/>
<path d="M853.8,263.2L858.4,264.4L856.4,269.6L854.9,269.3Z" fill="#a8a8a8"/>
<path d="M858.1,263.9L862.7,265.1L860.7,273.3L859.2,273.0Z" fill="#a8a8a8"/>
<path d="M862.2,265.0L866.8,266.2L864.8,271.9L863.3,271.6Z" fill="#a8a8a8"/>
<path d="M866.3,266.4L870.9,267.6L868.9,274.8L867.4,274.5Z" fill="#a8a8a8"/>
<path d="M870.4,267.8L875.0,269.0L873.0,274.2L871.5,273.9Z" fill="#a8a8a8"/>
<path d="M874.4,269.2L879.0,270.4L877.0,278.6L875.5,278.3Z" fill="#a8a8a8"/>
<path d="M878.5,270.6L883.1,271.8L881.1,277.5L879.6,277.2Z" fill="#a8a8a8"/>
<path d="M882.5,272.0L887.1,273.2L885.1,280.4L883.6,280.1Z" fill="#a8a8a8"/>
<path d="M886.4,273.9L891.0,275.1L889.0,280.3L887.5,280.0Z" fill="#a8a8a8"/>
<path d="M833.8,266.6L838.0,269.2L838.2,260.0L837.0,259.0Z" fill="#9e9e9e"/>
<path d="M836.9,269.3L841.1,271.9L841.3,265.2L840.1,264.2Z" fill="#9e9e9e"/>
<path d="M839.9,272.1L844.1,274.7L844.3,266.5L843.1,265.5Z" fill="#9e9e9e"/>
<path d="M843.0,274.8L847.2,277.4L847.4,271.2L846.2,270.2Z" fill="#9e9e9e"/>
<path d="M846.0,277.6L850.2,280.2L850.4,271.0L849.2,270.0Z" fill="#9e9e9e"/>
<path d="M849.1,280.3L853.3,282.9L853.5,276.2L852.3,275.2Z" fill="#9e9e9e"/>
<path d="M852.2,282.9L856.4,285.5L856.6,277.3L855.4,276.3Z" fill="#9e9e9e"/>
<path d="M855.5,285.4L859.7,288.0L859.9,281.8L858.7,280.8Z" fill="#9e9e9e"/>
<path d="M858.7,287.9L862.9,290.5L863.1,281.3L861.9,280.3Z" fill="#9e9e9e"/>
<path d="M862.0,290.4L866.2,293.0L866.4,286.3L865.2,285.3Z" fill="#9e9e9e"/>
<path d="M865.2,292.9L869.4,295.5L869.6,287.3L868.4,286.3Z" fill="#9e9e9e"/>
<path d="M868.5,295.4L872.7,298.0L872.9,291.8L871.7,290.8Z" fill="#9e9e9e"/>
<path d="M871.8,297.8L876.0,300.4L876.2,291.2L875.0,290.2Z" fill="#9e9e9e"/>
<path d="M875.1,300.2L879.3,302.8L879.5,296.1L878.3,295.1Z" fill="#9e9e9e"/>
<path d="M880.6,301.2L881.2,304.8L873.6,302.4Z" fill="#9a9a9a"/>
<path d="M884.1,299.0L884.7,302.6L879.1,300.2Z" fill="#9a9a9a"/>
<path d="M887.5,296.7L888.1,300.3L879.5,297.9Z" fill="#9a9a9a"/>
<path d="M887.8,292.7L888.4,296.3L882.3,293.9Z" fill="#9a9a9a"/>
<path d="M888.1,288.6L888.7,292.2L881.1,289.8Z" fill="#9a9a9a"/>
<path d="M888.4,284.5L889.0,288.1L883.4,285.7Z" fill="#9a9a9a"/>
<circle cx="846.2" cy="191.8" r="0.6" fill="#3a9c9c"/>
<circle cx="840.4" cy="192.3" r="0.8" fill="#3a9c9c"/>
<circle cx="870.8" cy="211.5" r="0.6" fill="#3a9c9c"/>
<circle cx="843.4" cy="187.4" r="0.9" fill="#3a9c9c"/>
<circle cx="877.1" cy="216.8" r="0.6" fill="#3a9c9c"/>
<circle cx="852.7" cy="198.3" r="0.8" fill="#3a9c9c"/>
<circle cx="875.1" cy="216.2" r="0.8" fill="#3a9c9c"/>
<circle cx="858.8" cy="201.9" r="0.5" fill="#3a9c9c"/>
<circle cx="882.2" cy="217.3" r="0.6" fill="#3a9c9c"/>
<circle cx="879.3" cy="220.5" r="0.8" fill="#3a9c9c"/>
<circle cx="860.4" cy="203.5" r="0.7" fill="#3a9c9c"/>
<circle cx="844.1" cy="194.2" r="0.5" fill="#3a9c9c"/>
<circle cx="840.8" cy="183.9" r="0.7" fill="#3a9c9c"/>
<circle cx="858.3" cy="207.0" r="0.6" fill="#3a9c9c"/>
<circle cx="854.8" cy="200.6" r="0.6" fill="#3a9c9c"/>
<circle cx="855.5" cy="194.9" r="0.7" fill="#3a9c9c"/>
<circle cx="876.3" cy="210.5" r="0.6" fill="#3a9c9c"/>
<circle cx="873.1" cy="207.9" r="0.6" fill="#3a9c9c"/>
<circle cx="845.7" cy="185.6" r="0.8" fill="#3a9c9c"/>
<circle cx="881.0" cy="218.3" r="0.9" fill="#3a9c9c"/>
<circle cx="837.6" cy="191.2" r="0.8" fill="#3a9c9c"/>
<circle cx="859.1" cy="200.4" r="0.8" fill="#3a9c9c"/>
<circle cx="849.4" cy="194.3" r="0.6" fill="#3a9c9c"/>
<circle cx="857.9" cy="196.0" r="0.5" fill="#3a9c9c"/>
<circle cx="838.0" cy="189.9" r="0.6" fill="#3a9c9c"/>
<circle cx="848.6" cy="200.7" r="0.7" fill="#3a9c9c"/>
<circle cx="197" cy="203.5" r="1.2" fill="#2a8888"/>
<circle cx="199.5" cy="205" r="1.2" fill="#2a8888"/>
<circle cx="196" cy="206" r="1.2" fill="#2a8888"/>
<circle cx="232" cy="224.5" r="1.2" fill="#2a8888"/>
<ellipse cx="819" cy="209" rx="3.2" ry="2.4" fill="#2f9797" transform="rotate(25 819 209)"/>
<circle cx="888.5" cy="241.5" r="1.8" fill="#2f9797"/>
<rect x="646.5" y="452" width="5.5" height="35.5" fill="#10cc10"/>
<rect x="200" y="575.5" width="58" height="4.5" fill="#a80000"/>
<path d="M256,574.3L268.5,577.8L256,581.3Z" fill="#a80000"/>
<rect x="232.5" y="554" width="3.6" height="58" fill="#009a00"/>
<path d="M230,556.5L234.3,543.5L238.6,556.5Z" fill="#009a00"/>
<circle cx="234.3" cy="577.8" r="3" fill="#000060"/>
<text x="234.6" y="542" font-size="7" fill="#333" font-family="Liberation Sans, sans-serif">Y</text>
<text x="268.6" y="578" font-size="7" fill="#333" font-family="Liberation Sans, sans-serif">X</text>
</svg>

<!-- ===== bottom toolbar ===== -->
<div class="a" style="left:405px;top:588px;width:408px;height:31px;border:1px solid #d6d6d6;box-sizing:border-box;background:#f2f2f2;"></div>
<div class="btn d" style="left:410px;"></div>
<div class="btn d" style="left:433px;"></div>
<div class="vs" style="left:456px;top:593px;height:19px;"></div>
<div class="btn" style="left:462px;"></div>
<div class="btn" style="left:485px;"></div>
<div class="vs" style="left:508px;top:593px;height:19px;"></div>
<div class="btn d" style="left:514px;"></div>
<div class="btn" style="left:537px;"></div>
<div class="btn" style="left:560px;"></div>
<div class="btn" style="left:583px;"></div>
<div class="btn" style="left:606px;"></div>
<div class="btn" style="left:629px;"></div>
<div class="btn" style="left:652px;"></div>
<div class="btn" style="left:675px;"></div>
<div class="btn d" style="left:698px;"></div>
<div class="btn d" style="left:721px;"></div>
<div class="btn" style="left:743px;"></div>
<div class="btn d" style="left:766px;"></div>
<div class="btn" style="left:789px;"></div>

<!-- ===== taskbar ===== -->
<div class="a" id="taskbar"></div>
<div class="a" style="left:141px;top:618px;width:26px;height:22px;background:#555;"></div>
<div class="a" style="left:117px;top:638px;width:22px;height:2px;background:#76b9ed;"></div>
<div class="a" style="left:142px;top:638px;width:24px;height:2px;background:#76b9ed;"></div>
<div class="a" style="left:169px;top:638px;width:22px;height:2px;background:#76b9ed;"></div>

<!-- ===== texts ===== -->
<div class="t" style="left:459px;top:3.5px;font-size:7.5px;color:#222;transform:scaleX(0.807);transform-origin:0 0;">新規プロジェクト</div>
<div class="t" style="left:508.7px;top:3.5px;font-size:8.2px;color:#222;transform:scaleX(0.936);transform-origin:0 0;">.atos - ATOS Professional 2018</div>
<div class="t" style="left:5px;top:21px;font-size:7.5px;color:#222;transform:scaleX(0.733);transform-origin:0 0;">ファイル</div>
<div class="t" style="left:39px;top:21px;font-size:7.5px;color:#222;transform:scaleX(1.000);transform-origin:0 0;">編集</div>
<div class="t" style="left:65px;top:21px;font-size:7.5px;color:#222;transform:scaleX(1.067);transform-origin:0 0;">表示</div>
<div class="t" style="left:91px;top:21px;font-size:7.5px;color:#222;transform:scaleX(0.808);transform-origin:0 0;">デジタイズ</div>
<div class="t" style="left:133px;top:21px;font-size:7.5px;color:#222;transform:scaleX(1.050);transform-origin:0 0;">幾何要素</div>
<div class="t" style="left:176px;top:21px;font-size:7.5px;color:#222;transform:scaleX(1.000);transform-origin:0 0;">検査</div>
<div class="t" style="left:202px;top:21px;font-size:7.5px;color:#222;transform:scaleX(0.774);transform-origin:0 0;">オペレーション</div>
<div class="t" style="left:253.5px;top:21px;font-size:7.5px;color:#222;transform:scaleX(0.707);transform-origin:0 0;">スクリプト</div>
<div class="t" style="left:291.5px;top:21px;font-size:7.5px;color:#222;transform:scaleX(0.844);transform-origin:0 0;">ヘルプ</div>
<div class="t" style="left:813.5px;top:20.3px;font-size:8.5px;color:#222;transform:scaleX(0.929);transform-origin:0 0;">Inspection</div>
<div class="t" style="left:869px;top:20.1px;font-size:7.5px;color:#b0b0b0;transform:scaleX(1.067);transform-origin:0 0;">検索</div>
<div class="t" style="left:859px;top:43px;font-size:7.5px;color:#fff;transform:scaleX(0.893);transform-origin:0 0;">オリジナル位置合わせ</div>
<div class="t" style="left:34px;top:63.1px;font-size:7.5px;color:#b0b0b0;transform:scaleX(1.030);transform-origin:0 0;">検索 (Ctrl+F)</div>
<div class="t" style="left:205px;top:63.4px;font-size:8.5px;color:#444;transform:scaleX(0.766);transform-origin:0 0;">PIP</div>
<div class="t" style="left:237px;top:63.1px;font-size:7.5px;color:#b0b0b0;transform:scaleX(0.756);transform-origin:0 0;">カメラ</div>
<div class="t" style="left:26px;top:77.1px;font-size:7.5px;color:#333;transform:scaleX(1.033);transform-origin:0 0;">実測要素</div>
<div class="t" style="left:3px;top:333.1px;font-size:7.5px;color:#333;transform:scaleX(1.000);transform-origin:0 0;">測定</div>
<div class="t" style="left:3px;top:350.1px;font-size:7.5px;color:#333;transform:scaleX(1.000);transform-origin:0 0;">名前</div>
<div class="t" style="left:80px;top:478.6px;font-size:7.5px;color:#333;transform:scaleX(0.933);transform-origin:0 0;">要素がない</div>
<div class="t" style="left:823px;top:624.7px;font-size:7px;color:#fff;transform:scaleX(0.667);transform-origin:0 0;">デスクトップ</div>
<div class="t" style="left:970px;top:620.9px;font-size:7px;color:#fff;transform:scaleX(0.806);transform-origin:0 0;">11:27</div>
<div class="t" style="left:961.5px;top:630.4px;font-size:7px;color:#fff;transform:scaleX(0.893);transform-origin:0 0;">2019/10/09</div>
<!-- ===== icons overlay ===== -->
<svg id="icons" width="1024" height="640" viewBox="0 0 1024 640">
<!-- title row icons -->
<g fill="#c23a3a"><rect x="3.1" y="4" width="1" height="5.2"/><rect x="5.1" y="4" width="1" height="5.2"/><rect x="7.1" y="4" width="1" height="5.2"/><rect x="9.1" y="4" width="1" height="5.2"/></g>
<g fill="none" stroke="#555" stroke-width="1"><path d="M19.5,2.5H27.5V11.2H19.5Z"/><path d="M21.6,2.5V6.4H26.2V2.5"/><path d="M21.6,11.2V9.2H26.2V11.2"/></g>
<path d="M38.2,7.2L41.6,4.2V6C44.6,5.8 46.2,7.4 46.3,9.6C45.2,8.2 43.8,7.9 41.6,8.1V10Z" fill="#222"/>
<path d="M52.6,5.6H56.2L54.4,7.7Z" fill="#333"/>
<path d="M76.2,7.2L72.8,4.2V6C69.8,5.8 68.2,7.4 68.1,9.6C69.2,8.2 70.6,7.9 72.8,8.1V10Z" fill="#b4b4b4"/>
<path d="M82,5.6H85.6L83.8,7.7Z" fill="#b8b8b8"/>
<rect x="94" y="3" width="0.8" height="8.5" fill="#cfcfcf"/>
<!-- window controls -->
<rect x="976" y="8.2" width="7" height="1.5" fill="#333"/>
<g fill="none" stroke="#333" stroke-width="1"><path d="M995.5,6.2H1000.5V9.8H995.5Z"/><path d="M997.2,6V4.4H1002.2V8H1000.7"/></g>
<path d="M1014.2,4.2L1020,10M1020,4.2L1014.2,10" stroke="#222" stroke-width="1.2" fill="none"/>
<!-- inspection icon -->
<g fill="none" stroke="#444" stroke-width="0.9"><path d="M802.5,20.5H808.5V26.5H802.5Z"/><path d="M804.3,22.8H807M804.3,24.4H806"/></g>
<g fill="#444"><rect x="801.2" y="19.2" width="2.2" height="2.2"/><rect x="807.6" y="19.2" width="2.2" height="2.2"/><rect x="801.2" y="25.6" width="2.2" height="2.2"/><rect x="806.6" y="25.4" width="3.8" height="3.3"/></g>
<path d="M857.6,22.2H861.2L859.4,24.3Z" fill="#333"/>
<g fill="none" stroke="#333" stroke-width="1"><path d="M976,20.6L978.5,23L981,20.6"/><path d="M976,23.8L978.5,26.2L981,23.8"/></g>
<!-- gom logo -->
<text x="991.8" y="26.1" font-family="Liberation Sans, sans-serif" font-weight="bold" font-size="18" fill="#111" textLength="9" lengthAdjust="spacingAndGlyphs">g</text><text x="1000.6" y="24.2" font-family="Liberation Sans, sans-serif" font-weight="bold" font-size="13.2" fill="#111" textLength="19.2" lengthAdjust="spacingAndGlyphs">om</text>
<circle cx="1004.4" cy="20.6" r="1.1" fill="#e02020"/>
<!-- blue bar icons -->
<g fill="#fff"><rect x="6" y="42" width="11.2" height="1.3"/><rect x="6" y="45.1" width="11.2" height="1.3"/><rect x="6" y="48.2" width="11.2" height="1.3"/>
<path d="M27.4,44.2H31.2L29.3,46.6Z"/>
<path d="M43,40.4H50.8V46.4H48.4V48.6H43Z"/><rect x="45.9" y="42" width="1.9" height="4.9" fill="#1f3571"/>
<rect x="50.2" y="46" width="1.3" height="5.4"/><rect x="48.1" y="48" width="5.6" height="1.3"/>
<rect x="72" y="42.3" width="1.6" height="6.8"/><rect x="75" y="42.3" width="1.6" height="6.8"/><rect x="78" y="42.3" width="1.6" height="6.8"/><rect x="80.8" y="42.3" width="1.6" height="6.8"/>
</g>
<g fill="none" stroke="#6a7aa8" stroke-width="1.1"><path d="M100.4,43.2H108.8V51"/><path d="M103.6,40.4V48.4H108.4"/></g><rect x="110.4" y="47.3" width="1.1" height="1.1" fill="#6a7aa8"/>
<circle cx="133.7" cy="45.4" r="3.3" fill="none" stroke="#fff" stroke-width="2.8"/>
<g stroke="#1f3571" stroke-width="1"><path d="M133.7,40V42.3M133.7,48.5V50.8M128.4,45.4H130.7M136.7,45.4H139"/></g>
<g fill="#6a7aa8"><circle cx="158.2" cy="43.1" r="1"/><circle cx="160.7" cy="48.3" r="1"/><circle cx="157" cy="47" r="0.6"/><path d="M164.4,41.8H165.6V44.6H167.2L165,47L162.8,44.6H164.4Z"/></g>
<g fill="#fff"><rect x="185.4" y="40.4" width="1.5" height="10.6"/><path d="M188,40.6H195.4V47.4H188Z"/></g>
<g fill="#1f3571"><rect x="189" y="44.1" width="2.6" height="2.4"/><rect x="191.9" y="41.5" width="2.6" height="2.4"/></g>
<g fill="#fff"><rect x="819.7" y="41" width="1.4" height="10"/><rect x="815.4" y="45.3" width="10" height="1.4"/>
<path d="M836,44.2H839.8L837.9,46.6Z"/>
<path d="M848,42H854.4V43.6H852.6L850.4,46.4L849.2,45.5L850.8,43.6H848Z"/><circle cx="848.8" cy="48.2" r="1.1"/>
<path d="M931.8,44.2H935.6L933.7,46.6Z"/>
<rect x="948.8" y="50" width="8.6" height="1.2"/><circle cx="953" cy="44.6" r="1.5"/></g>
<circle cx="953" cy="44.6" r="3.7" fill="none" stroke="#fff" stroke-width="1.2"/>
<g stroke="#56628a" stroke-width="1.5" fill="none"><path d="M981.5,41V50M977,45.5H986M978.3,42.3L984.7,48.7M984.7,42.3L978.3,48.7"/></g>
<g fill="#5a678d"><circle cx="1009.5" cy="44" r="3.6"/><rect x="1007.4" y="48.4" width="4.2" height="1"/><rect x="1008" y="50" width="3" height="0.9"/></g>
<!-- subtoolbar icons -->
<g fill="none" stroke="#555" stroke-width="1"><path d="M10.5,61.5H17.5V68.5H10.5Z" fill="#f2f2f2"/><path d="M9,64.5H7.5V71.5H14.5V70" stroke-dasharray="1.6 0.9"/></g>
<g fill="none" stroke="#444" stroke-width="1.1"><path d="M152.4,65.6A3.3,3.3 0 0 1 158.4,64.6"/><path d="M158.7,67.6A3.3,3.3 0 0 1 152.6,68.6"/></g>
<path d="M158.9,62.6V65.4H156.2ZM152,70.6V67.8H154.8Z" fill="#444"/>
<path d="M176.6,64A3.7,3.7 0 1 0 177.2,67.6" fill="none" stroke="#444" stroke-width="1.2"/><path d="M177.6,62V65.3H174.3Z" fill="#444"/>
<path d="M184.6,65.4H188.2L186.4,67.5Z" fill="#444"/>
<!-- tree -->
<path d="M6.2,79L8.6,81.2L6.2,83.4Z" fill="#444"/>
<path d="M14.5,78H18.2L19,79.2H23.5V84.6H14.5Z" fill="#f6f6f6" stroke="#777" stroke-width="0.9"/><path d="M14.5,80.2H23.5" stroke="#999" stroke-width="0.6"/>
<path d="M82,336H85.6L83.8,338.1Z" fill="#444"/>
<circle cx="151.2" cy="353.6" r="3.8" fill="none" stroke="#444" stroke-width="0.9"/><path d="M149.3,353.6L150.8,355.1L153.4,352.2" fill="none" stroke="#333" stroke-width="1.1"/>
<path d="M172,354Q176,350.6 180,354Q176,357.4 172,354Z" fill="#555"/><circle cx="176" cy="354" r="1.1" fill="#ddd"/>
<!-- collapse chevrons -->
<g fill="none" stroke="#333" stroke-width="1"><path d="M1015,336L1012.4,338.6L1015,341.2"/><path d="M1018.2,336L1015.6,338.6L1018.2,341.2"/></g>
<!-- bottom toolbar icons -->
<g fill="none" stroke="#b8b8b8" stroke-width="1"><path d="M414.5,599.5H424V605.5H414.5Z"/><path d="M440,606.5H446.5V601"/></g><g fill="#b8b8b8"><rect x="416.3" y="601.2" width="2.4" height="2.6"/><rect x="420" y="601.2" width="2.4" height="2.6" opacity="0.6"/><path d="M437.5,605.4L446.8,598.6V600.2L437.5,607Z"/><path d="M437.5,598.8H445.5L443.6,600.2H437.5Z"/></g>
<path d="M466.5,598.5H473V604H466.5Z" fill="none" stroke="#555" stroke-width="0.9" stroke-dasharray="1.5 1.1"/><path d="M472,601.6L476.2,605.2L474.4,605.4L475.4,607.4L474.4,607.8L473.5,605.9L472,607Z" fill="#222"/>
<g fill="#333"><rect x="493.6" y="597.5" width="0.9" height="10"/><rect x="489.4" y="599.6" width="3" height="6"/><rect x="495.6" y="599.6" width="3" height="6"/></g>
<g fill="#a9a9a9"><rect x="517" y="596.8" width="11" height="8.4"/><rect x="519" y="606.4" width="7" height="1.1"/><rect x="521.8" y="605" width="1.4" height="1.6"/></g><circle cx="522.5" cy="601" r="3" fill="#f4f4f4"/><circle cx="522.5" cy="601" r="1.2" fill="#a9a9a9"/>
<g fill="#b83a3a"><rect x="541" y="603.9" width="5" height="1.3"/><rect x="545.4" y="605.4" width="5" height="1.3"/><path d="M545.6,598.4L547.4,600.4L545.6,602.4L543.8,600.4Z"/>
<rect x="564" y="600.4" width="9.4" height="1.3"/><rect x="568" y="599" width="1.2" height="6"/><circle cx="568.6" cy="598" r="0.9"/><path d="M568.6,607.6L566.8,605.2L568.6,603.6L570.4,605.2Z"/>
<rect x="587" y="600" width="3.4" height="5" opacity="0.55"/><rect x="590.6" y="599.6" width="1.2" height="5.8"/><rect x="592" y="601.6" width="4.6" height="1.1"/><rect x="592" y="603.8" width="4.6" height="1.1"/><rect x="596" y="601.6" width="1" height="3.3"/>
<rect x="609.4" y="598" width="1.6" height="9.2"/><rect x="609.4" y="605.7" width="9.4" height="1.6"/><rect x="610" y="598" width="8.8" height="0.8" opacity="0.6"/><rect x="618" y="598" width="0.8" height="9" opacity="0.6"/>
<rect x="633" y="598.4" width="8.6" height="8.6" opacity="0.3"/><rect x="633.4" y="597.6" width="1" height="10"/><rect x="632.4" y="606" width="10" height="1"/><rect x="640.6" y="597.6" width="0.8" height="10" opacity="0.6"/><rect x="632.4" y="598.4" width="10" height="0.8" opacity="0.6"/><rect x="636.4" y="600.6" width="1.3" height="4"/><rect x="636.4" y="603.6" width="3.4" height="1.2"/>
</g>
<g fill="none" stroke="#b83a3a" stroke-width="1.1"><path d="M656.2,598.2V607H665Z"/><path d="M656.2,603.2H661.2M659,607V601" stroke-width="0.8"/>
<circle cx="681.2" cy="600.4" r="2.2" stroke-width="1.5"/><circle cx="685.2" cy="604.6" r="2.4" stroke-width="1.5"/></g>
<g fill="none" stroke="#dba4a4" stroke-width="0.8"><path d="M702.5,599H710.5V607H702.5ZM702.5,601.7H710.5M702.5,604.3H710.5M705.2,599V607M707.8,599V607"/><path d="M701,599.5V598H702.5M712,599.5V598H710.5M701,606.5V608H702.5M712,606.5V608H710.5"/>
<path d="M727,600.5H732V605.5H727Z"/><path d="M724.6,599.8V598.2H726.2M734.4,599.8V598.2H732.8M724.6,606.2V607.8H726.2M734.4,606.2V607.8H732.8"/></g>
<g fill="none" stroke="#b83a3a" stroke-width="1"><path d="M747.5,598.5H755.5V605H747.5Z"/><path d="M756.8,600V606.4H749" opacity="0.7"/></g><path d="M749.6,601.6L751.2,603.2L753.8,600.2" fill="none" stroke="#7a1f1f" stroke-width="1.3"/>
<g fill="none" stroke="#dba4a4" stroke-width="0.9"><path d="M771.5,598.5H779.5V605H771.5Z"/><path d="M770,600V606.4H778" opacity="0.8"/><path d="M773.8,600L777.2,603.6M777.2,600L773.8,603.6" stroke="#c58a8a"/></g>
<g fill="#b83a3a"><rect x="793" y="598.4" width="4.2" height="4.2"/><path d="M799,599.6H801.6V598.4L803.6,600.2L801.6,602V600.8H799Z"/><path d="M797,605.4H794.8V606.6L792.9,604.8L794.8,603V604.2H797Z" /></g><rect x="799.2" y="603.8" width="4" height="3.8" fill="none" stroke="#b83a3a" stroke-width="1"/>
<!-- taskbar icons -->
<g fill="#fff"><path d="M8,626.4L11.8,625.9V629.3H8ZM12.3,625.8L17,625.1V629.3H12.3ZM8,629.8H11.8V633.2L8,632.7ZM12.3,629.8H17V634L12.3,633.3Z"/></g>
<circle cx="38.2" cy="629.5" r="3.6" fill="none" stroke="#fff" stroke-width="1.3"/>
<g fill="none" stroke="#ddd" stroke-width="1"><path d="M61.5,626.5H66V632.5H61.5Z"/><path d="M59.4,627V632M68.2,627V632"/></g><rect x="60.6" y="625.2" width="6.4" height="0.9" fill="#ddd"/><rect x="60.6" y="633" width="6.4" height="0.9" fill="#ddd"/>
<rect x="80" y="624" width="0.8" height="11" fill="#555"/>
<rect x="97" y="623" width="10" height="13" rx="0.8" fill="#f4f4f4"/><rect x="98.4" y="624.4" width="7.2" height="2.6" fill="#444"/><g fill="#444"><rect x="98.6" y="628.2" width="1.6" height="1.4"/><rect x="101.2" y="628.2" width="1.6" height="1.4"/><rect x="103.8" y="628.2" width="1.6" height="1.4"/><rect x="98.6" y="630.6" width="1.6" height="1.4"/><rect x="101.2" y="630.6" width="1.6" height="1.4"/><rect x="103.8" y="630.6" width="1.6" height="1.4"/><rect x="98.6" y="633" width="1.6" height="1.4"/><rect x="101.2" y="633" width="1.6" height="1.4"/><rect x="103.8" y="633" width="1.6" height="1.4"/></g>
<path d="M122,624.6H126.4L127.6,626H134.8V634.2H122Z" fill="#f0c64f"/><path d="M122,627H134.8V634.2H122Z" fill="#f7dc7d"/><rect x="125.2" y="629.6" width="6.4" height="4.6" fill="#4aa7e8"/><rect x="127" y="631.6" width="2.8" height="2.6" fill="#f7dc7d"/>
<rect x="148" y="623.4" width="12.4" height="12" rx="0.8" fill="#fff" stroke="#c05050" stroke-width="0.8"/><g fill="#c23a3a"><rect x="150.6" y="626.4" width="1.1" height="6"/><rect x="152.8" y="626.4" width="1.1" height="6"/><rect x="155" y="626.4" width="1.1" height="6"/><rect x="157.2" y="626.4" width="1.1" height="6"/></g>
<ellipse cx="179.4" cy="630.2" rx="5.4" ry="4.4" fill="#e8e8ee" stroke="#8a8fa8" stroke-width="0.7"/><circle cx="176.6" cy="629.2" r="1" fill="#e04a3a"/><circle cx="179" cy="627.6" r="1" fill="#3a8ae0"/><circle cx="181.8" cy="628.6" r="1" fill="#3ab45a"/><circle cx="178" cy="632" r="1" fill="#e8c23a"/><path d="M180.4,633.4L185,624.4L186.2,625L182,634Z" fill="#c8903a"/>
<rect x="817" y="623" width="0.8" height="12" fill="#666"/>
<rect x="854" y="620" width="7" height="18" fill="#5a5a5a"/><path d="M855.6,621.6L857,622.8L855.6,624M858,621.6L859.4,622.8L858,624" fill="none" stroke="#eee" stroke-width="0.8"/>
<g fill="none" stroke="#eee" stroke-width="0.9"><circle cx="875" cy="627.6" r="1.8"/><path d="M871.8,633.6Q872,630 875,630Q878,630 878.2,633.6"/><path d="M878.4,625.6A1.4,1.4 0 1 1 879.6,628"/>
<path d="M893.2,631.4L896.2,628.2L899.2,631.4"/>
<path d="M904.5,625.5H912V631H904.5Z"/><path d="M903.6,633H908"/>
<path d="M917.6,628H919.4L921.6,626V633L919.4,631H917.6Z" fill="#eee"/><path d="M923,627.4Q924.2,629.5 923,631.6M924.6,626.2Q926.6,629.5 924.6,632.8" stroke-width="0.7"/></g>
<path d="M909,634L912,628.6L915,634Z" fill="#f2c23a"/>
<circle cx="933.6" cy="629.4" r="3.4" fill="#bdbdbd"/><path d="M932.2,628L935,630.8M935,628L932.2,630.8" stroke="#2b2b2b" stroke-width="0.9"/>
<rect x="945" y="625.4" width="8.4" height="7.6" rx="1" fill="#f4f4f4"/><path d="M949,626.6A2.9,2.9 0 0 0 949,632.2Z" fill="#222"/><path d="M950.4,626.8V632" stroke="#222" stroke-width="1.2"/>
<path d="M1002.5,623.5H1011.5V630.5H1006L1004,632.5V630.5H1002.5Z" fill="#eee"/><path d="M1004,625.6H1010M1004,627.4H1010" stroke="#2b2b2b" stroke-width="0.6"/><circle cx="1011" cy="632.6" r="3" fill="#2b2b2b" stroke="#ddd" stroke-width="0.7"/><text x="1009.7" y="634.6" font-size="5" fill="#fff" font-family="Liberation Sans, sans-serif">3</text>

</svg>
</body>
</html>
